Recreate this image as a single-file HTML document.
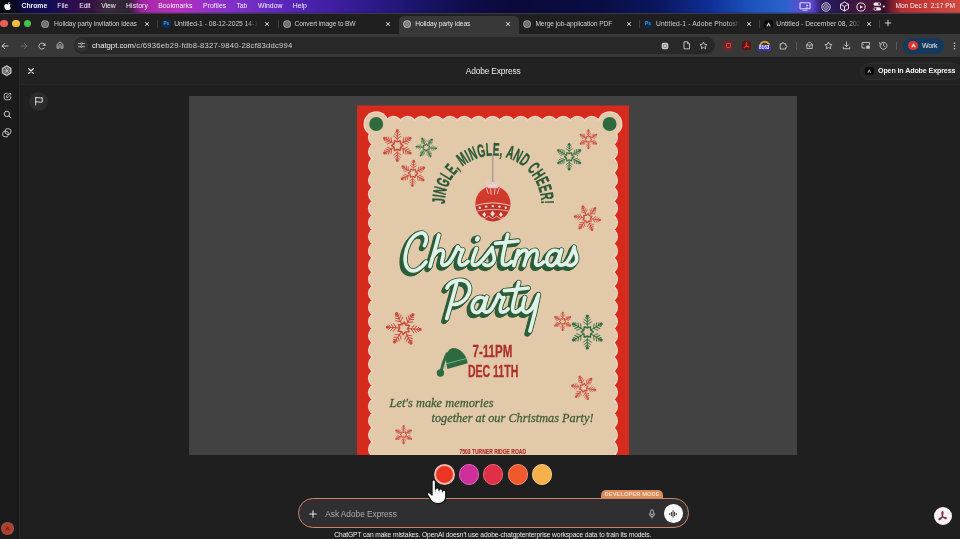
<!DOCTYPE html>
<html><head><meta charset="utf-8"><title>Holiday party ideas</title>
<style>
*{margin:0;padding:0;box-sizing:border-box}
html,body{width:960px;height:539px;overflow:hidden;background:#1e1e1e}
body{font-family:"Liberation Sans",sans-serif;position:relative;color:#ddd}
.t{position:absolute;white-space:pre;display:block}
.a{position:absolute}
svg{position:absolute;overflow:visible}
</style></head><body><div id="root" style="position:absolute;left:0;top:0;width:960px;height:539px;will-change:transform">
<div class="a" id="menubar" style="left:0;top:0;width:960px;height:13px;background:linear-gradient(90deg,
#07070f 0px,#090a1c 14px,#0d0c4a 24px,#120b56 48px,#2c0c52 70px,#34123f 92px,#3b2a3e 106px,#2e2432 128px,#55195a 133px,#9a229a 141px,#ad2aae 152px,#b52fba 178px,#9a30c8 205px,#7a2ec8 240px,#5e28bc 280px,#4520a8 320px,#2e1a8c 370px,#191468 420px,#0f0c48 470px,#0b0a3a 520px,#0a0d44 600px,#0b1660 660px,#0f2f98 710px,#1c52bb 750px,#2a62cc 785px,#5a4fd0 800px,#5a46c8 812px,#2c1c62 822px,#2a1850 840px,#431640 856px,#4a1638 872px,#34102a 884px,#7a1f2c 892px,#b62e32 902px,#c63c38 930px,#cf4a40 960px)"></div>
<div class="a" style="left:0;top:11.5px;width:960px;height:2px;background:linear-gradient(180deg,rgba(0,0,0,0),rgba(0,0,0,.55))"></div>
<svg style="left:3px;top:1px" width="8" height="10" viewBox="0 0 170 200"><path fill="#fff" d="M150 155c-6 14-9 20-17 32-11 17-27 38-46 38-17 0-22-11-45-11-23 0-28 11-45 11 0 0 0 0 0 0-19 0-34-19-45-36C-79 142-82 86-63 56c14-21 35-33 55-33 21 0 34 11 51 11 17 0 27-11 51-11 18 0 37 10 51 27-45 24-37 88 5 105zM92-4c8-11 15-26 12-42-14 1-30 10-39 21-8 10-16 26-13 41 15 0 31-9 40-20z" transform="translate(75 45) scale(.62)"/></svg>
<span class="t" id="t0" style="left:21.5px;top:2.67px;font-size:6.85px;line-height:6.85px;color:#f4f0fa;font-weight:700;letter-spacing:-0.027px;">Chrome</span>
<span class="t" id="t1" style="left:57.3px;top:2.67px;font-size:6.85px;line-height:6.85px;color:#f4f0fa;font-weight:400;letter-spacing:-0.008px;">File</span>
<span class="t" id="t2" style="left:79.3px;top:2.67px;font-size:6.85px;line-height:6.85px;color:#f4f0fa;font-weight:400;letter-spacing:-0.199px;">Edit</span>
<span class="t" id="t3" style="left:101.3px;top:2.67px;font-size:6.85px;line-height:6.85px;color:#f4f0fa;font-weight:400;letter-spacing:-0.130px;">View</span>
<span class="t" id="t4" style="left:126px;top:2.67px;font-size:6.85px;line-height:6.85px;color:#f4f0fa;font-weight:400;letter-spacing:0.100px;">History</span>
<span class="t" id="t5" style="left:158.3px;top:2.67px;font-size:6.85px;line-height:6.85px;color:#f4f0fa;font-weight:400;letter-spacing:-0.026px;">Bookmarks</span>
<span class="t" id="t6" style="left:203px;top:2.67px;font-size:6.85px;line-height:6.85px;color:#f4f0fa;font-weight:400;letter-spacing:0.059px;">Profiles</span>
<span class="t" id="t7" style="left:236.5px;top:2.67px;font-size:6.85px;line-height:6.85px;color:#f4f0fa;font-weight:400;letter-spacing:-0.082px;">Tab</span>
<span class="t" id="t8" style="left:258px;top:2.67px;font-size:6.85px;line-height:6.85px;color:#f4f0fa;font-weight:400;letter-spacing:0.026px;">Window</span>
<span class="t" id="t9" style="left:292.7px;top:2.67px;font-size:6.85px;line-height:6.85px;color:#f4f0fa;font-weight:400;letter-spacing:0.055px;">Help</span>
<span class="t" id="t10" style="left:895.5px;top:2.80px;font-size:6.6px;line-height:6.6px;color:#fdf0f0;font-weight:400;letter-spacing:-0.034px;">Mon Dec 8  2:17 PM</span>
<svg style="left:799px;top:2px" width="12" height="9" viewBox="0 0 24 18"><rect x="2" y="1.5" width="20" height="12" rx="1.5" fill="none" stroke="#d9d6ff" stroke-width="2.4"/><rect x="7" y="15.5" width="10" height="1.8" fill="#d9d6ff"/><circle cx="16" cy="7" r="2" fill="#d9d6ff"/><path d="M12 13c0-3 8-3 8 0z" fill="#d9d6ff"/></svg>
<svg style="left:821px;top:1.5px" width="10" height="10" viewBox="0 0 20 20"><circle cx="10" cy="10" r="8.4" fill="none" stroke="#e8e2f0" stroke-width="1.8"/><circle cx="10" cy="10" r="4.6" fill="none" stroke="#e8e2f0" stroke-width="1.6"/><circle cx="10" cy="10" r="1.6" fill="#e8e2f0"/></svg>
<svg style="left:839px;top:1px" width="11" height="11" viewBox="0 0 22 22"><path d="M11 2l8 4.5v9L11 20l-8-4.500v-9z M3 6.500l8 4.500 8-4.500 M11 11v9" fill="none" stroke="#f0e4ee" stroke-width="1.9" stroke-linejoin="round"/></svg>
<svg style="left:856px;top:1.5px" width="10" height="10" viewBox="0 0 20 20"><circle cx="10" cy="10" r="8.200" fill="none" stroke="#f0e4ea" stroke-width="1.9"/><path d="M8 6.300l6 3.700-6 3.700z" fill="#f0e4ea"/></svg>
<svg style="left:873px;top:2px" width="13" height="9" viewBox="0 0 26 18"><rect x="1" y="1" width="15" height="6.500" rx="3.200" fill="#f4e8ec"/><rect x="1" y="10.500" width="15" height="6.500" rx="3.200" fill="#f4e8ec"/><circle cx="12.500" cy="4.200" r="2.100" fill="#4a1638"/><circle cx="4.600" cy="13.700" r="2.100" fill="#4a1638"/><circle cx="21.500" cy="9" r="2.200" fill="#f4e8ec"/></svg>
<div class="a" id="tabstrip" style="left:0;top:13px;width:960px;height:21px;background:#1f1f20;border-top:1px solid #3c3c4c"></div>
<div class="a" style="left:398.5px;top:15.5px;width:120.5px;height:18.5px;background:#383838;border-radius:5px 5px 0 0"></div>
<div class="a" id="toolbar" style="left:0;top:33.700px;width:960px;height:23.300px;background:#383838"></div>

<div class="a" style="left:0.19999999999999973px;top:19.600px;width:7.800px;height:7.800px;border-radius:50%;background:#ec5f57"></div>
<div class="a" style="left:11.9px;top:19.600px;width:7.800px;height:7.800px;border-radius:50%;background:#f4bd3a"></div>
<div class="a" style="left:23.6px;top:19.600px;width:7.800px;height:7.800px;border-radius:50%;background:#46c34b"></div>
<svg style="left:41.199999999999996px;top:19.799999999999997px" width="8.2" height="8.2" viewBox="0 0 20 20"><circle cx="10" cy="10" r="9.600" fill="#9c9c9c"/><path d="M10 3.500l5.600 3.250v6.500L10 16.500l-5.600-3.250v-6.500z M10 7l2.600 1.500v3L10 13l-2.600-1.500v-3z" fill="none" stroke="#2a2a2a" stroke-width="1.300"/></svg>
<span class="t" id="t11" style="left:54px;top:20.55px;font-size:6.7px;line-height:6.7px;color:#cfcfcf;font-weight:400;letter-spacing:-0.078px;">Holiday party invitation ideas</span>
<svg style="left:143.2px;top:19.9px" width="8" height="8" viewBox="-4 -4 8 8"><path d="M-1.75 -1.75L1.75 1.75M1.75 -1.75L-1.75 1.75" stroke="#d2d2d2" stroke-width="1.0" stroke-linecap="round"/></svg>
<div class="a" style="left:162.3px;top:19.9px;width:8.400px;height:8.400px;border-radius:3.200px;background:#0e2c52"></div><span class="t" style="left:163.4px;top:21.4px;font-size:4.600px;line-height:5px;color:#4f97e0;font-weight:700">Ps</span>
<span class="t" id="t12" style="left:174.3px;top:20.55px;font-size:6.7px;line-height:6.7px;color:#cfcfcf;font-weight:400;letter-spacing:-0.011px;-webkit-mask-image:linear-gradient(90deg,#000 86%,transparent 100%);mask-image:linear-gradient(90deg,#000 86%,transparent 100%);">Untitled-1 - 08-12-2025 14-1</span>
<svg style="left:263.2px;top:19.9px" width="8" height="8" viewBox="-4 -4 8 8"><path d="M-1.75 -1.75L1.75 1.75M1.75 -1.75L-1.75 1.75" stroke="#d2d2d2" stroke-width="1.0" stroke-linecap="round"/></svg>
<svg style="left:282.7px;top:19.799999999999997px" width="8.2" height="8.2" viewBox="0 0 20 20"><circle cx="10" cy="10" r="9.600" fill="#9c9c9c"/><path d="M10 3.500l5.600 3.250v6.500L10 16.500l-5.600-3.250v-6.500z M10 7l2.600 1.500v3L10 13l-2.600-1.500v-3z" fill="none" stroke="#2a2a2a" stroke-width="1.300"/></svg>
<span class="t" id="t13" style="left:294.5px;top:20.55px;font-size:6.7px;line-height:6.7px;color:#cfcfcf;font-weight:400;letter-spacing:-0.135px;">Convert image to BW</span>
<svg style="left:383.6px;top:19.9px" width="8" height="8" viewBox="-4 -4 8 8"><path d="M-1.75 -1.75L1.75 1.75M1.75 -1.75L-1.75 1.75" stroke="#d2d2d2" stroke-width="1.0" stroke-linecap="round"/></svg>
<svg style="left:403.2px;top:19.799999999999997px" width="8.2" height="8.2" viewBox="0 0 20 20"><circle cx="10" cy="10" r="9.600" fill="#b4b4b4"/><path d="M10 3.500l5.600 3.250v6.500L10 16.500l-5.600-3.250v-6.500z M10 7l2.600 1.500v3L10 13l-2.600-1.500v-3z" fill="none" stroke="#2a2a2a" stroke-width="1.300"/></svg>
<span class="t" id="t14" style="left:415.3px;top:20.55px;font-size:6.7px;line-height:6.7px;color:#e6e6e6;font-weight:400;letter-spacing:-0.099px;">Holiday party ideas</span>
<svg style="left:504.2px;top:19.9px" width="8" height="8" viewBox="-4 -4 8 8"><path d="M-1.75 -1.75L1.75 1.75M1.75 -1.75L-1.75 1.75" stroke="#d2d2d2" stroke-width="1.0" stroke-linecap="round"/></svg>
<svg style="left:523.1999999999999px;top:19.799999999999997px" width="8.2" height="8.2" viewBox="0 0 20 20"><circle cx="10" cy="10" r="9.600" fill="#9c9c9c"/><path d="M10 3.500l5.600 3.250v6.500L10 16.500l-5.600-3.250v-6.500z M10 7l2.600 1.500v3L10 13l-2.600-1.500v-3z" fill="none" stroke="#2a2a2a" stroke-width="1.300"/></svg>
<span class="t" id="t15" style="left:535.4px;top:20.55px;font-size:6.7px;line-height:6.7px;color:#cfcfcf;font-weight:400;letter-spacing:-0.092px;">Merge job-application PDF</span>
<svg style="left:624.5px;top:19.9px" width="8" height="8" viewBox="-4 -4 8 8"><path d="M-1.75 -1.75L1.75 1.75M1.75 -1.75L-1.75 1.75" stroke="#d2d2d2" stroke-width="1.0" stroke-linecap="round"/></svg>
<div class="a" style="left:644px;top:19.9px;width:8.400px;height:8.400px;border-radius:3.200px;background:#0e2c52"></div><span class="t" style="left:645.1px;top:21.4px;font-size:4.600px;line-height:5px;color:#4f97e0;font-weight:700">Ps</span>
<span class="t" id="t16" style="left:656px;top:20.55px;font-size:6.7px;line-height:6.7px;color:#cfcfcf;font-weight:400;letter-spacing:0.156px;-webkit-mask-image:linear-gradient(90deg,#000 86%,transparent 100%);mask-image:linear-gradient(90deg,#000 86%,transparent 100%);">Untitled-1 - Adobe Photosh</span>
<svg style="left:745.3px;top:19.9px" width="8" height="8" viewBox="-4 -4 8 8"><path d="M-1.75 -1.75L1.75 1.75M1.75 -1.75L-1.75 1.75" stroke="#d2d2d2" stroke-width="1.0" stroke-linecap="round"/></svg>
<div class="a" style="left:764.3px;top:19.9px;width:8.400px;height:8.400px;border-radius:3px;background:#0a0a0a"></div><svg style="left:765.6999999999999px;top:21.5px" width="5.200" height="4.800" viewBox="0 0 10 9"><path d="M5 0.500L9.500 8.500H6.800L5 5.300 3.200 8.500H0.500z" fill="#cfcfcf"/></svg>
<span class="t" id="t17" style="left:776.3px;top:20.55px;font-size:6.7px;line-height:6.7px;color:#cfcfcf;font-weight:400;letter-spacing:0.021px;-webkit-mask-image:linear-gradient(90deg,#000 86%,transparent 100%);mask-image:linear-gradient(90deg,#000 86%,transparent 100%);">Untitled - December 08, 202</span>
<svg style="left:865.4px;top:19.9px" width="8" height="8" viewBox="-4 -4 8 8"><path d="M-1.75 -1.75L1.75 1.75M1.75 -1.75L-1.75 1.75" stroke="#d2d2d2" stroke-width="1.0" stroke-linecap="round"/></svg>
<div class="a" style="left:157.3px;top:19.500px;width:1px;height:8px;background:#3e3e3e"></div>
<div class="a" style="left:277.5px;top:19.500px;width:1px;height:8px;background:#3e3e3e"></div>
<div class="a" style="left:638.7px;top:19.500px;width:1px;height:8px;background:#3e3e3e"></div>
<div class="a" style="left:759.4px;top:19.500px;width:1px;height:8px;background:#3e3e3e"></div>
<div class="a" style="left:879px;top:19.500px;width:1px;height:8px;background:#3e3e3e"></div>
<svg style="left:884px;top:19.400px" width="8" height="8" viewBox="-4 -4 8 8"><path d="M-2.800 0H2.800M0 -2.800V2.800" stroke="#d6d6d6" stroke-width="0.950" stroke-linecap="round"/></svg>
<svg style="left:1px;top:41.6px" width="8" height="8" viewBox="-4 -4 8 8"><path d="M3 0H-2.800M-0.300 -2.700L-3 0l2.700 2.700" fill="none" stroke="#c8c8c8" stroke-width="0.950" stroke-linecap="round" stroke-linejoin="round"/></svg>
<svg style="left:19.500px;top:41.6px" width="8" height="8" viewBox="-4 -4 8 8"><path d="M-3 0H2.800M0.300 -2.700L3 0l-2.700 2.700" fill="none" stroke="#6e6e6e" stroke-width="0.950" stroke-linecap="round" stroke-linejoin="round"/></svg>
<svg style="left:37.700px;top:41.6px" width="8" height="8" viewBox="-4 -4 8 8"><path d="M2.900 -0.600A3 3 0 1 0 2.200 2.100" fill="none" stroke="#c8c8c8" stroke-width="0.950" stroke-linecap="round"/><path d="M3.400 -3.200v2.900H0.500z" fill="#c8c8c8"/></svg>
<svg style="left:55.800px;top:41.4px" width="8" height="8" viewBox="-4 -4 8 8"><path d="M-2.900 3.200V-0.600L0 -3.100 2.900 -0.600V3.200H1V0.600A1 1 0 0 0 -1 0.600V3.200z" fill="none" stroke="#c8c8c8" stroke-width="0.900" stroke-linejoin="round"/></svg>
<div class="a" style="left:74px;top:36.800px;width:640.500px;height:16.800px;border-radius:8.400px;background:#282828"></div>
<div class="a" style="left:75.300px;top:38.900px;width:13.200px;height:13.200px;border-radius:50%;background:#323232"></div>
<svg style="left:77.800px;top:42.1px" width="7" height="6.200" viewBox="0 0 16 14"><path d="M1 3.500h5M10.500 3.500H15M1 10.500h4.500M10 10.500h5" stroke="#d8d8d8" stroke-width="1.700" stroke-linecap="round"/><circle cx="8.300" cy="3.500" r="2" fill="none" stroke="#d8d8d8" stroke-width="1.500"/><circle cx="7.700" cy="10.500" r="2" fill="none" stroke="#d8d8d8" stroke-width="1.500"/></svg>
<span class="t" id="t18" style="left:92px;top:42.05px;font-size:7.7px;line-height:7.7px;color:#f2f2f2;font-weight:400;letter-spacing:0.010px;">chatgpt.com</span>
<span class="t" id="t19" style="left:134px;top:42.05px;font-size:7.7px;line-height:7.7px;color:#cfcfcf;font-weight:400;letter-spacing:0.217px;">/c/6936eb29-fdb8-8327-9840-28cf83ddc994</span>
<svg style="left:661px;top:41.6px" width="8" height="8" viewBox="0 0 16 16"><rect x="1.500" y="1.500" width="13" height="13" rx="3.500" fill="#cfcfcf"/><circle cx="8" cy="8" r="3.600" fill="none" stroke="#555" stroke-width="1.300"/></svg>
<svg style="left:682.500px;top:41.300000000000004px" width="7.500" height="8.600" viewBox="0 0 15 17"><path d="M2 1.500h7l4 4V15.500H2z" fill="none" stroke="#d4d4d4" stroke-width="1.700" stroke-linejoin="round"/><path d="M9 1.500v4h4" fill="none" stroke="#d4d4d4" stroke-width="1.400"/></svg>
<svg style="left:698.800px;top:41.1px" width="9" height="9" viewBox="0 0 18 18"><path d="M9 2l2.100 4.600 5 .6-3.700 3.400 1 4.900L9 13l-4.400 2.500 1-4.900L1.900 7.200l5-.6z" fill="none" stroke="#d4d4d4" stroke-width="1.600" stroke-linejoin="round"/></svg>
<div class="a" style="left:723.200px;top:40.800000000000004px;width:10px;height:9.600px;border-radius:2.200px;background:#6e2324"></div>
<div class="a" style="left:725.600px;top:43.1px;width:5.200px;height:5px;border-radius:1.200px;border:1px solid #d6514c"></div>
<svg style="left:741.500px;top:41.1px" width="9" height="9" viewBox="0 0 18 18"><rect x="0" y="0" width="18" height="18" rx="3" fill="#5a1512"/><path d="M9 3c1.300 0 1 3-0.300 6.200C7.500 12 5 14.500 4 13.600c-1-1 2-2.600 5.600-3 3-0.400 5.200 0.500 4.500 1.500-0.800 1-3.600-0.800-5.200-3.200C7.600 6.800 7.800 3 9 3z" fill="none" stroke="#ff4a3a" stroke-width="1.500"/></svg>
<svg style="left:758.500px;top:40.6px" width="11" height="5" viewBox="0 0 22 10"><path d="M2 8C5 1 14 -1 20 6" fill="none" stroke="#e8a63a" stroke-width="3.200" stroke-linecap="round"/></svg>
<div class="a" style="left:757.600px;top:45.300000000000004px;width:13.200px;height:6.200px;border-radius:2px;background:#3a33b0"></div>
<span class="t" id="t20" style="left:759px;top:46.20px;font-size:4.6px;line-height:4.6px;color:#fff;font-weight:700;letter-spacing:0.041px;">8163</span>
<svg style="left:778.500px;top:41.1px" width="9" height="9" viewBox="0 0 18 18"><path d="M2.500 5.500H6.200C5.200 2.300 10.800 2.300 9.800 5.500H13.500V9.200C16.700 8.200 16.700 13.800 13.500 12.800V16H2.500z" fill="none" stroke="#d0d0d0" stroke-width="1.700" stroke-linejoin="round"/></svg>
<div class="a" style="left:796.200px;top:41.6px;width:1px;height:8px;background:#5a5a5a"></div>
<svg style="left:804.500px;top:41.1px" width="9" height="9" viewBox="0 0 18 18"><path d="M2 8h14M4 8c0-7 10-7 10 0M3.500 8v7h11V8" fill="none" stroke="#cfcfcf" stroke-width="1.600" stroke-linejoin="round"/><circle cx="9" cy="11.500" r="1.600" fill="#cfcfcf"/></svg>
<svg style="left:823.500px;top:41.1px" width="9" height="9" viewBox="0 0 18 18"><path d="M9 2l2.100 4.600 5 .6-3.700 3.400 1 4.900L9 13l-4.400 2.500 1-4.900L1.900 7.200l5-.6z" fill="none" stroke="#cfcfcf" stroke-width="1.700" stroke-linejoin="round"/></svg>
<svg style="left:842.300px;top:41.1px" width="9" height="9" viewBox="0 0 18 18"><path d="M9 2v9M5 7.500L9 11.500l4-4M2.500 12.500V15.500h13V12.500" fill="none" stroke="#cfcfcf" stroke-width="1.800" stroke-linejoin="round" stroke-linecap="round"/></svg>
<svg style="left:860.500px;top:41.1px" width="9.500" height="9" viewBox="0 0 19 18"><path d="M17 8V3H2v11h7" fill="none" stroke="#cfcfcf" stroke-width="1.700" stroke-linejoin="round"/><rect x="10.500" y="9" width="7" height="6.500" rx="1" fill="#cfcfcf"/><path d="M4 6.500h2" stroke="#cfcfcf" stroke-width="1.500"/></svg>
<svg style="left:878.500px;top:41.1px" width="9" height="9" viewBox="0 0 18 18"><path d="M3.200 5.500A7 7 0 1 1 2 9" fill="none" stroke="#cfcfcf" stroke-width="1.700" stroke-linecap="round"/><path d="M1 2.500l.8 4.300 4.200-.9" fill="none" stroke="#cfcfcf" stroke-width="1.600" stroke-linejoin="round"/><path d="M9 5.500V9.300l2.500 1.700" fill="none" stroke="#cfcfcf" stroke-width="1.600" stroke-linecap="round"/></svg>
<div class="a" style="left:895.600px;top:41.6px;width:1px;height:8px;background:#5a5a5a"></div>
<div class="a" style="left:902.500px;top:37.600px;width:41px;height:16px;border-radius:8px;background:#15395c"></div>
<div class="a" style="left:908.200px;top:40.800000000000004px;width:9.600px;height:9.600px;border-radius:50%;background:#e0352a"></div>
<svg style="left:910.500px;top:43.1px" width="5" height="4.600" viewBox="0 0 10 9"><path d="M5 0.500L9.500 8.500H6.800L5 5.300 3.200 8.500H0.500z" fill="#fff"/></svg>
<span class="t" id="t21" style="left:922px;top:42.20px;font-size:7px;line-height:7px;color:#e9eef6;font-weight:400;letter-spacing:-0.205px;">Work</span>
<svg style="left:953px;top:41.6px" width="3" height="8" viewBox="0 0 3 8"><circle cx="1.500" cy="1.200" r="0.800" fill="#cfcfcf"/><circle cx="1.500" cy="4" r="0.800" fill="#cfcfcf"/><circle cx="1.500" cy="6.800" r="0.800" fill="#cfcfcf"/></svg>
<div class="a" style="left:0;top:57.500px;width:960px;height:481.500px;background:#1f1f1f"></div>
<div class="a" style="left:0;top:57.500px;width:20px;height:481.500px;background:#1b1b1b;border-right:1px solid #262626"></div>
<div class="a" style="left:21px;top:57.500px;width:939px;height:26px;background:#222222"></div>
<div class="a" style="left:20px;top:83.500px;width:940px;height:1px;background:#272727"></div>
<svg style="left:1.200px;top:64.900px" width="11.400" height="11.400" viewBox="0 0 22 22"><path d="M11 1.200l8.500 4.900v9.800L11 20.800l-8.500-4.900V6.100z" fill="#c4c4c4" stroke="#c4c4c4" stroke-width="1.600" stroke-linejoin="round"/><path d="M11 4.200l5.900 3.400v6.800L11 17.800l-5.900-3.400V7.600z M11 7.400l3.100 1.800v3.600L11 14.600l-3.100-1.800V9.200z M11 4.200v3.200 M16.900 7.600l-2.800 1.600 M16.900 14.400l-2.800-1.600 M11 17.800v-3.200 M5.100 14.400l2.800-1.600 M5.100 7.600l2.800 1.600" fill="none" stroke="#1b1b1b" stroke-width="1.100"/></svg>
<svg style="left:2.800px;top:92px" width="9" height="9" viewBox="0 0 18 18"><path d="M8.500 2.600H6A3.600 3.600 0 0 0 2.400 6.200V12A3.600 3.600 0 0 0 6 15.600H11.800A3.600 3.600 0 0 0 15.400 12V9.500" fill="none" stroke="#cfcfcf" stroke-width="1.700" stroke-linecap="round"/><path d="M13.600 1.800l2.600 2.600-6.300 6.300-3.100.5.500-3.100z" fill="none" stroke="#cfcfcf" stroke-width="1.600" stroke-linejoin="round"/></svg>
<svg style="left:2.600px;top:110.200px" width="9" height="9" viewBox="0 0 18 18"><circle cx="7.800" cy="7.800" r="5.400" fill="none" stroke="#cfcfcf" stroke-width="1.900"/><path d="M11.800 11.800L16 16" stroke="#cfcfcf" stroke-width="2" stroke-linecap="round"/></svg>
<svg style="left:2.300px;top:128.300px" width="9.500" height="9.500" viewBox="0 0 19 19"><rect x="6.500" y="1.500" width="11" height="11" rx="3.500" fill="none" stroke="#cfcfcf" stroke-width="1.700" transform="rotate(12 12 7)"/><rect x="1.500" y="6.500" width="11" height="11" rx="3.500" fill="none" stroke="#cfcfcf" stroke-width="1.700" transform="rotate(12 7 12)"/></svg>
<div class="a" style="left:1px;top:522px;width:12.500px;height:12.500px;border-radius:50%;background:radial-gradient(circle at 50% 52%,#b63c1c 0,#ad3f2a 40%,#9a5048 70%,#6a4446 90%,#3a2c2e 100%)"></div>
<svg style="left:4.800px;top:525.800px" width="5" height="4.600" viewBox="0 0 10 9"><path d="M5 0.500L9.500 8.500H6.800L5 5.300 3.200 8.500H0.500z" fill="#7c2012"/></svg>
<svg style="left:27.3px;top:66.6px" width="8" height="8" viewBox="-4 -4 8 8"><path d="M-2.5 -2.5L2.5 2.5M2.5 -2.5L-2.5 2.5" stroke="#e6e6e6" stroke-width="1.15" stroke-linecap="round"/></svg>
<span class="t" id="t22" style="left:465.8px;top:66.70px;font-size:8.4px;line-height:8.4px;color:#ececec;font-weight:400;letter-spacing:-0.162px;">Adobe Express</span>
<div class="a" style="left:860px;top:62.500px;width:102px;height:17px;border-radius:8.500px;border:1px solid #2e2e2e;background:#262626"></div>
<div class="a" style="left:865.200px;top:66.600px;width:8.600px;height:8.600px;border-radius:2.200px;background:#0a0a0a"></div>
<svg style="left:867.300px;top:68.800px" width="4.400" height="4" viewBox="0 0 10 9"><path d="M5 0.500L9.500 8.500H6.800L5 5.300 3.200 8.500H0.500z" fill="#b9b9b9"/></svg>
<span class="t" id="t23" style="left:878px;top:67.65px;font-size:7.1px;line-height:7.1px;color:#f6f6f6;font-weight:700;letter-spacing:-0.117px;">Open in Adobe Express</span>
<div class="a" style="left:29.400px;top:92px;width:18.800px;height:18.800px;border-radius:50%;background:#2b2b2b"></div>
<svg style="left:33.600px;top:96.400px" width="10" height="10" viewBox="0 0 20 20"><path d="M3.500 2.500V18 M3.500 3.500C8 2 12 5 16.500 3.500V12C12 13.500 8 10.500 3.500 12" fill="none" stroke="#e8e8e8" stroke-width="1.900" stroke-linejoin="round" stroke-linecap="round"/></svg>
<div class="a" style="left:189px;top:96px;width:608px;height:359px;background:#424242;overflow:hidden">
<svg style="left:0;top:0" width="608" height="359" viewBox="189 96 608 359"><rect x="357" y="105.500" width="272" height="360" fill="#d62a1c"/><rect x="372.66" y="120.56" width="240.68" height="350" fill="#fbd6c8"/><circle cx="393.40" cy="125.0" r="9.15" fill="#fbd6c8"/><circle cx="407.56" cy="125.0" r="9.15" fill="#fbd6c8"/><circle cx="421.72" cy="125.0" r="9.15" fill="#fbd6c8"/><circle cx="435.88" cy="125.0" r="9.15" fill="#fbd6c8"/><circle cx="450.04" cy="125.0" r="9.15" fill="#fbd6c8"/><circle cx="464.20" cy="125.0" r="9.15" fill="#fbd6c8"/><circle cx="478.36" cy="125.0" r="9.15" fill="#fbd6c8"/><circle cx="492.52" cy="125.0" r="9.15" fill="#fbd6c8"/><circle cx="506.69" cy="125.0" r="9.15" fill="#fbd6c8"/><circle cx="520.85" cy="125.0" r="9.15" fill="#fbd6c8"/><circle cx="535.01" cy="125.0" r="9.15" fill="#fbd6c8"/><circle cx="549.17" cy="125.0" r="9.15" fill="#fbd6c8"/><circle cx="563.33" cy="125.0" r="9.15" fill="#fbd6c8"/><circle cx="577.49" cy="125.0" r="9.15" fill="#fbd6c8"/><circle cx="591.65" cy="125.0" r="9.15" fill="#fbd6c8"/><circle cx="377.1" cy="137.50" r="9.15" fill="#fbd6c8"/><circle cx="608.9" cy="137.50" r="9.15" fill="#fbd6c8"/><circle cx="377.1" cy="151.66" r="9.15" fill="#fbd6c8"/><circle cx="608.9" cy="151.66" r="9.15" fill="#fbd6c8"/><circle cx="377.1" cy="165.82" r="9.15" fill="#fbd6c8"/><circle cx="608.9" cy="165.82" r="9.15" fill="#fbd6c8"/><circle cx="377.1" cy="179.98" r="9.15" fill="#fbd6c8"/><circle cx="608.9" cy="179.98" r="9.15" fill="#fbd6c8"/><circle cx="377.1" cy="194.14" r="9.15" fill="#fbd6c8"/><circle cx="608.9" cy="194.14" r="9.15" fill="#fbd6c8"/><circle cx="377.1" cy="208.30" r="9.15" fill="#fbd6c8"/><circle cx="608.9" cy="208.30" r="9.15" fill="#fbd6c8"/><circle cx="377.1" cy="222.46" r="9.15" fill="#fbd6c8"/><circle cx="608.9" cy="222.46" r="9.15" fill="#fbd6c8"/><circle cx="377.1" cy="236.62" r="9.15" fill="#fbd6c8"/><circle cx="608.9" cy="236.62" r="9.15" fill="#fbd6c8"/><circle cx="377.1" cy="250.78" r="9.15" fill="#fbd6c8"/><circle cx="608.9" cy="250.78" r="9.15" fill="#fbd6c8"/><circle cx="377.1" cy="264.94" r="9.15" fill="#fbd6c8"/><circle cx="608.9" cy="264.94" r="9.15" fill="#fbd6c8"/><circle cx="377.1" cy="279.10" r="9.15" fill="#fbd6c8"/><circle cx="608.9" cy="279.10" r="9.15" fill="#fbd6c8"/><circle cx="377.1" cy="293.26" r="9.15" fill="#fbd6c8"/><circle cx="608.9" cy="293.26" r="9.15" fill="#fbd6c8"/><circle cx="377.1" cy="307.42" r="9.15" fill="#fbd6c8"/><circle cx="608.9" cy="307.42" r="9.15" fill="#fbd6c8"/><circle cx="377.1" cy="321.58" r="9.15" fill="#fbd6c8"/><circle cx="608.9" cy="321.58" r="9.15" fill="#fbd6c8"/><circle cx="377.1" cy="335.74" r="9.15" fill="#fbd6c8"/><circle cx="608.9" cy="335.74" r="9.15" fill="#fbd6c8"/><circle cx="377.1" cy="349.90" r="9.15" fill="#fbd6c8"/><circle cx="608.9" cy="349.90" r="9.15" fill="#fbd6c8"/><circle cx="377.1" cy="364.06" r="9.15" fill="#fbd6c8"/><circle cx="608.9" cy="364.06" r="9.15" fill="#fbd6c8"/><circle cx="377.1" cy="378.22" r="9.15" fill="#fbd6c8"/><circle cx="608.9" cy="378.22" r="9.15" fill="#fbd6c8"/><circle cx="377.1" cy="392.38" r="9.15" fill="#fbd6c8"/><circle cx="608.9" cy="392.38" r="9.15" fill="#fbd6c8"/><circle cx="377.1" cy="406.54" r="9.15" fill="#fbd6c8"/><circle cx="608.9" cy="406.54" r="9.15" fill="#fbd6c8"/><circle cx="377.1" cy="420.70" r="9.15" fill="#fbd6c8"/><circle cx="608.9" cy="420.70" r="9.15" fill="#fbd6c8"/><circle cx="377.1" cy="434.86" r="9.15" fill="#fbd6c8"/><circle cx="608.9" cy="434.86" r="9.15" fill="#fbd6c8"/><circle cx="377.1" cy="449.02" r="9.15" fill="#fbd6c8"/><circle cx="608.9" cy="449.02" r="9.15" fill="#fbd6c8"/><circle cx="377.1" cy="463.18" r="9.15" fill="#fbd6c8"/><circle cx="608.9" cy="463.18" r="9.15" fill="#fbd6c8"/><circle cx="376.2" cy="123.900" r="12.65" fill="#fbd6c8"/><circle cx="609.8" cy="123.900" r="12.65" fill="#fbd6c8"/><rect x="373.35" y="121.25" width="239.30" height="350" fill="#e2c9a9"/><circle cx="393.40" cy="125.0" r="8.0" fill="#e2c9a9"/><circle cx="407.56" cy="125.0" r="8.0" fill="#e2c9a9"/><circle cx="421.72" cy="125.0" r="8.0" fill="#e2c9a9"/><circle cx="435.88" cy="125.0" r="8.0" fill="#e2c9a9"/><circle cx="450.04" cy="125.0" r="8.0" fill="#e2c9a9"/><circle cx="464.20" cy="125.0" r="8.0" fill="#e2c9a9"/><circle cx="478.36" cy="125.0" r="8.0" fill="#e2c9a9"/><circle cx="492.52" cy="125.0" r="8.0" fill="#e2c9a9"/><circle cx="506.69" cy="125.0" r="8.0" fill="#e2c9a9"/><circle cx="520.85" cy="125.0" r="8.0" fill="#e2c9a9"/><circle cx="535.01" cy="125.0" r="8.0" fill="#e2c9a9"/><circle cx="549.17" cy="125.0" r="8.0" fill="#e2c9a9"/><circle cx="563.33" cy="125.0" r="8.0" fill="#e2c9a9"/><circle cx="577.49" cy="125.0" r="8.0" fill="#e2c9a9"/><circle cx="591.65" cy="125.0" r="8.0" fill="#e2c9a9"/><circle cx="377.1" cy="137.50" r="8.0" fill="#e2c9a9"/><circle cx="608.9" cy="137.50" r="8.0" fill="#e2c9a9"/><circle cx="377.1" cy="151.66" r="8.0" fill="#e2c9a9"/><circle cx="608.9" cy="151.66" r="8.0" fill="#e2c9a9"/><circle cx="377.1" cy="165.82" r="8.0" fill="#e2c9a9"/><circle cx="608.9" cy="165.82" r="8.0" fill="#e2c9a9"/><circle cx="377.1" cy="179.98" r="8.0" fill="#e2c9a9"/><circle cx="608.9" cy="179.98" r="8.0" fill="#e2c9a9"/><circle cx="377.1" cy="194.14" r="8.0" fill="#e2c9a9"/><circle cx="608.9" cy="194.14" r="8.0" fill="#e2c9a9"/><circle cx="377.1" cy="208.30" r="8.0" fill="#e2c9a9"/><circle cx="608.9" cy="208.30" r="8.0" fill="#e2c9a9"/><circle cx="377.1" cy="222.46" r="8.0" fill="#e2c9a9"/><circle cx="608.9" cy="222.46" r="8.0" fill="#e2c9a9"/><circle cx="377.1" cy="236.62" r="8.0" fill="#e2c9a9"/><circle cx="608.9" cy="236.62" r="8.0" fill="#e2c9a9"/><circle cx="377.1" cy="250.78" r="8.0" fill="#e2c9a9"/><circle cx="608.9" cy="250.78" r="8.0" fill="#e2c9a9"/><circle cx="377.1" cy="264.94" r="8.0" fill="#e2c9a9"/><circle cx="608.9" cy="264.94" r="8.0" fill="#e2c9a9"/><circle cx="377.1" cy="279.10" r="8.0" fill="#e2c9a9"/><circle cx="608.9" cy="279.10" r="8.0" fill="#e2c9a9"/><circle cx="377.1" cy="293.26" r="8.0" fill="#e2c9a9"/><circle cx="608.9" cy="293.26" r="8.0" fill="#e2c9a9"/><circle cx="377.1" cy="307.42" r="8.0" fill="#e2c9a9"/><circle cx="608.9" cy="307.42" r="8.0" fill="#e2c9a9"/><circle cx="377.1" cy="321.58" r="8.0" fill="#e2c9a9"/><circle cx="608.9" cy="321.58" r="8.0" fill="#e2c9a9"/><circle cx="377.1" cy="335.74" r="8.0" fill="#e2c9a9"/><circle cx="608.9" cy="335.74" r="8.0" fill="#e2c9a9"/><circle cx="377.1" cy="349.90" r="8.0" fill="#e2c9a9"/><circle cx="608.9" cy="349.90" r="8.0" fill="#e2c9a9"/><circle cx="377.1" cy="364.06" r="8.0" fill="#e2c9a9"/><circle cx="608.9" cy="364.06" r="8.0" fill="#e2c9a9"/><circle cx="377.1" cy="378.22" r="8.0" fill="#e2c9a9"/><circle cx="608.9" cy="378.22" r="8.0" fill="#e2c9a9"/><circle cx="377.1" cy="392.38" r="8.0" fill="#e2c9a9"/><circle cx="608.9" cy="392.38" r="8.0" fill="#e2c9a9"/><circle cx="377.1" cy="406.54" r="8.0" fill="#e2c9a9"/><circle cx="608.9" cy="406.54" r="8.0" fill="#e2c9a9"/><circle cx="377.1" cy="420.70" r="8.0" fill="#e2c9a9"/><circle cx="608.9" cy="420.70" r="8.0" fill="#e2c9a9"/><circle cx="377.1" cy="434.86" r="8.0" fill="#e2c9a9"/><circle cx="608.9" cy="434.86" r="8.0" fill="#e2c9a9"/><circle cx="377.1" cy="449.02" r="8.0" fill="#e2c9a9"/><circle cx="608.9" cy="449.02" r="8.0" fill="#e2c9a9"/><circle cx="377.1" cy="463.18" r="8.0" fill="#e2c9a9"/><circle cx="608.9" cy="463.18" r="8.0" fill="#e2c9a9"/><circle cx="376.2" cy="123.900" r="11.5" fill="#e2c9a9"/><circle cx="609.8" cy="123.900" r="11.5" fill="#e2c9a9"/><circle cx="376.2" cy="124" r="7" fill="#2d6a40"/><circle cx="609.6" cy="124" r="7" fill="#2d6a40"/><g transform="translate(397.3 145.6) rotate(0) scale(1.56)" stroke="#c9463b" stroke-width="0.55" stroke-linecap="round" fill="none"><g transform="rotate(0)"><path d="M0 -2.600V-9.300 M0 -4.300l-2.300 -1.700 M0 -4.300l2.300 -1.700 M0 -6l-1.900 -1.500 M0 -6l1.900 -1.500 M0 -7.600l-1.300 -1.100 M0 -7.600l1.300 -1.100"/><circle cx="0" cy="-9.500" r="0.950" fill="#c9463b" stroke="none"/></g><g transform="rotate(60)"><path d="M0 -2.600V-9.300 M0 -4.300l-2.300 -1.700 M0 -4.300l2.300 -1.700 M0 -6l-1.900 -1.500 M0 -6l1.900 -1.500 M0 -7.600l-1.300 -1.100 M0 -7.600l1.300 -1.100"/><circle cx="0" cy="-9.500" r="0.950" fill="#c9463b" stroke="none"/></g><g transform="rotate(120)"><path d="M0 -2.600V-9.300 M0 -4.300l-2.300 -1.700 M0 -4.300l2.300 -1.700 M0 -6l-1.900 -1.500 M0 -6l1.900 -1.500 M0 -7.600l-1.300 -1.100 M0 -7.600l1.300 -1.100"/><circle cx="0" cy="-9.500" r="0.950" fill="#c9463b" stroke="none"/></g><g transform="rotate(180)"><path d="M0 -2.600V-9.300 M0 -4.300l-2.300 -1.700 M0 -4.300l2.300 -1.700 M0 -6l-1.900 -1.500 M0 -6l1.900 -1.500 M0 -7.600l-1.300 -1.100 M0 -7.600l1.300 -1.100"/><circle cx="0" cy="-9.500" r="0.950" fill="#c9463b" stroke="none"/></g><g transform="rotate(240)"><path d="M0 -2.600V-9.300 M0 -4.300l-2.300 -1.700 M0 -4.300l2.300 -1.700 M0 -6l-1.900 -1.500 M0 -6l1.900 -1.500 M0 -7.600l-1.300 -1.100 M0 -7.600l1.300 -1.100"/><circle cx="0" cy="-9.500" r="0.950" fill="#c9463b" stroke="none"/></g><g transform="rotate(300)"><path d="M0 -2.600V-9.300 M0 -4.300l-2.300 -1.700 M0 -4.300l2.300 -1.700 M0 -6l-1.900 -1.500 M0 -6l1.900 -1.500 M0 -7.600l-1.300 -1.100 M0 -7.600l1.300 -1.100"/><circle cx="0" cy="-9.500" r="0.950" fill="#c9463b" stroke="none"/></g><path d="M1.85 -3.20L1.99 -1.15L3.70 -0.00L1.99 1.15L1.85 3.20L0.00 2.30L-1.85 3.20L-1.99 1.15L-3.70 0.00L-1.99 -1.15L-1.85 -3.20L-0.00 -2.30Z" stroke-width="0.83" stroke-linejoin="round"/></g><g transform="translate(426.3 147.5) rotate(-25) scale(1.03)" stroke="#2d6a40" stroke-width="0.58" stroke-linecap="round" fill="none"><g transform="rotate(0)"><path d="M0 -2.600V-9.300 M0 -4.300l-2.300 -1.700 M0 -4.300l2.300 -1.700 M0 -6l-1.900 -1.500 M0 -6l1.900 -1.500 M0 -7.600l-1.300 -1.100 M0 -7.600l1.300 -1.100"/><circle cx="0" cy="-9.500" r="0.950" fill="#2d6a40" stroke="none"/></g><g transform="rotate(60)"><path d="M0 -2.600V-9.300 M0 -4.300l-2.300 -1.700 M0 -4.300l2.300 -1.700 M0 -6l-1.900 -1.500 M0 -6l1.900 -1.500 M0 -7.600l-1.300 -1.100 M0 -7.600l1.300 -1.100"/><circle cx="0" cy="-9.500" r="0.950" fill="#2d6a40" stroke="none"/></g><g transform="rotate(120)"><path d="M0 -2.600V-9.300 M0 -4.300l-2.300 -1.700 M0 -4.300l2.300 -1.700 M0 -6l-1.900 -1.500 M0 -6l1.900 -1.500 M0 -7.600l-1.300 -1.100 M0 -7.600l1.300 -1.100"/><circle cx="0" cy="-9.500" r="0.950" fill="#2d6a40" stroke="none"/></g><g transform="rotate(180)"><path d="M0 -2.600V-9.300 M0 -4.300l-2.300 -1.700 M0 -4.300l2.300 -1.700 M0 -6l-1.900 -1.500 M0 -6l1.900 -1.500 M0 -7.600l-1.300 -1.100 M0 -7.600l1.300 -1.100"/><circle cx="0" cy="-9.500" r="0.950" fill="#2d6a40" stroke="none"/></g><g transform="rotate(240)"><path d="M0 -2.600V-9.300 M0 -4.300l-2.300 -1.700 M0 -4.300l2.300 -1.700 M0 -6l-1.900 -1.500 M0 -6l1.900 -1.500 M0 -7.600l-1.300 -1.100 M0 -7.600l1.300 -1.100"/><circle cx="0" cy="-9.500" r="0.950" fill="#2d6a40" stroke="none"/></g><g transform="rotate(300)"><path d="M0 -2.600V-9.300 M0 -4.300l-2.300 -1.700 M0 -4.300l2.300 -1.700 M0 -6l-1.900 -1.500 M0 -6l1.900 -1.500 M0 -7.600l-1.300 -1.100 M0 -7.600l1.300 -1.100"/><circle cx="0" cy="-9.500" r="0.950" fill="#2d6a40" stroke="none"/></g><path d="M1.85 -3.20L1.99 -1.15L3.70 -0.00L1.99 1.15L1.85 3.20L0.00 2.30L-1.85 3.20L-1.99 1.15L-3.70 0.00L-1.99 -1.15L-1.85 -3.20L-0.00 -2.30Z" stroke-width="0.87" stroke-linejoin="round"/></g><g transform="translate(413 173.3) rotate(3) scale(1.3)" stroke="#c9463b" stroke-width="0.55" stroke-linecap="round" fill="none"><g transform="rotate(0)"><path d="M0 -2.600V-9.300 M0 -4.300l-2.300 -1.700 M0 -4.300l2.300 -1.700 M0 -6l-1.900 -1.500 M0 -6l1.900 -1.500 M0 -7.600l-1.300 -1.100 M0 -7.600l1.300 -1.100"/><circle cx="0" cy="-9.500" r="0.950" fill="#c9463b" stroke="none"/></g><g transform="rotate(60)"><path d="M0 -2.600V-9.300 M0 -4.300l-2.300 -1.700 M0 -4.300l2.300 -1.700 M0 -6l-1.900 -1.500 M0 -6l1.900 -1.500 M0 -7.600l-1.300 -1.100 M0 -7.600l1.300 -1.100"/><circle cx="0" cy="-9.500" r="0.950" fill="#c9463b" stroke="none"/></g><g transform="rotate(120)"><path d="M0 -2.600V-9.300 M0 -4.300l-2.300 -1.700 M0 -4.300l2.300 -1.700 M0 -6l-1.900 -1.500 M0 -6l1.900 -1.500 M0 -7.600l-1.300 -1.100 M0 -7.600l1.300 -1.100"/><circle cx="0" cy="-9.500" r="0.950" fill="#c9463b" stroke="none"/></g><g transform="rotate(180)"><path d="M0 -2.600V-9.300 M0 -4.300l-2.300 -1.700 M0 -4.300l2.300 -1.700 M0 -6l-1.900 -1.500 M0 -6l1.900 -1.500 M0 -7.600l-1.300 -1.100 M0 -7.600l1.300 -1.100"/><circle cx="0" cy="-9.500" r="0.950" fill="#c9463b" stroke="none"/></g><g transform="rotate(240)"><path d="M0 -2.600V-9.300 M0 -4.300l-2.300 -1.700 M0 -4.300l2.300 -1.700 M0 -6l-1.900 -1.500 M0 -6l1.900 -1.500 M0 -7.600l-1.300 -1.100 M0 -7.600l1.300 -1.100"/><circle cx="0" cy="-9.500" r="0.950" fill="#c9463b" stroke="none"/></g><g transform="rotate(300)"><path d="M0 -2.600V-9.300 M0 -4.300l-2.300 -1.700 M0 -4.300l2.300 -1.700 M0 -6l-1.900 -1.500 M0 -6l1.900 -1.500 M0 -7.600l-1.300 -1.100 M0 -7.600l1.300 -1.100"/><circle cx="0" cy="-9.500" r="0.950" fill="#c9463b" stroke="none"/></g><path d="M1.85 -3.20L1.99 -1.15L3.70 -0.00L1.99 1.15L1.85 3.20L0.00 2.30L-1.85 3.20L-1.99 1.15L-3.70 0.00L-1.99 -1.15L-1.85 -3.20L-0.00 -2.30Z" stroke-width="0.83" stroke-linejoin="round"/></g><g transform="translate(569.2 156.7) rotate(0) scale(1.3199999999999998)" stroke="#2d6a40" stroke-width="0.55" stroke-linecap="round" fill="none"><g transform="rotate(0)"><path d="M0 -2.600V-9.300 M0 -4.300l-2.300 -1.700 M0 -4.300l2.300 -1.700 M0 -6l-1.900 -1.500 M0 -6l1.900 -1.500 M0 -7.600l-1.300 -1.100 M0 -7.600l1.300 -1.100"/><circle cx="0" cy="-9.500" r="0.950" fill="#2d6a40" stroke="none"/></g><g transform="rotate(60)"><path d="M0 -2.600V-9.300 M0 -4.300l-2.300 -1.700 M0 -4.300l2.300 -1.700 M0 -6l-1.900 -1.500 M0 -6l1.900 -1.500 M0 -7.600l-1.300 -1.100 M0 -7.600l1.300 -1.100"/><circle cx="0" cy="-9.500" r="0.950" fill="#2d6a40" stroke="none"/></g><g transform="rotate(120)"><path d="M0 -2.600V-9.300 M0 -4.300l-2.300 -1.700 M0 -4.300l2.300 -1.700 M0 -6l-1.900 -1.500 M0 -6l1.900 -1.500 M0 -7.600l-1.300 -1.100 M0 -7.600l1.300 -1.100"/><circle cx="0" cy="-9.500" r="0.950" fill="#2d6a40" stroke="none"/></g><g transform="rotate(180)"><path d="M0 -2.600V-9.300 M0 -4.300l-2.300 -1.700 M0 -4.300l2.300 -1.700 M0 -6l-1.900 -1.500 M0 -6l1.900 -1.500 M0 -7.600l-1.300 -1.100 M0 -7.600l1.300 -1.100"/><circle cx="0" cy="-9.500" r="0.950" fill="#2d6a40" stroke="none"/></g><g transform="rotate(240)"><path d="M0 -2.600V-9.300 M0 -4.300l-2.300 -1.700 M0 -4.300l2.300 -1.700 M0 -6l-1.900 -1.500 M0 -6l1.900 -1.500 M0 -7.600l-1.300 -1.100 M0 -7.600l1.300 -1.100"/><circle cx="0" cy="-9.500" r="0.950" fill="#2d6a40" stroke="none"/></g><g transform="rotate(300)"><path d="M0 -2.600V-9.300 M0 -4.300l-2.300 -1.700 M0 -4.300l2.300 -1.700 M0 -6l-1.900 -1.500 M0 -6l1.900 -1.500 M0 -7.600l-1.300 -1.100 M0 -7.600l1.300 -1.100"/><circle cx="0" cy="-9.500" r="0.950" fill="#2d6a40" stroke="none"/></g><path d="M1.85 -3.20L1.99 -1.15L3.70 -0.00L1.99 1.15L1.85 3.20L0.00 2.30L-1.85 3.20L-1.99 1.15L-3.70 0.00L-1.99 -1.15L-1.85 -3.20L-0.00 -2.30Z" stroke-width="0.82" stroke-linejoin="round"/></g><g transform="translate(588.4 139.3) rotate(0) scale(0.95)" stroke="#c9463b" stroke-width="0.63" stroke-linecap="round" fill="none"><g transform="rotate(0)"><path d="M0 -2.600V-9.300 M0 -4.300l-2.300 -1.700 M0 -4.300l2.300 -1.700 M0 -6l-1.900 -1.500 M0 -6l1.900 -1.500 M0 -7.600l-1.300 -1.100 M0 -7.600l1.300 -1.100"/><circle cx="0" cy="-9.500" r="0.950" fill="#c9463b" stroke="none"/></g><g transform="rotate(60)"><path d="M0 -2.600V-9.300 M0 -4.300l-2.300 -1.700 M0 -4.300l2.300 -1.700 M0 -6l-1.900 -1.500 M0 -6l1.900 -1.500 M0 -7.600l-1.300 -1.100 M0 -7.600l1.300 -1.100"/><circle cx="0" cy="-9.500" r="0.950" fill="#c9463b" stroke="none"/></g><g transform="rotate(120)"><path d="M0 -2.600V-9.300 M0 -4.300l-2.300 -1.700 M0 -4.300l2.300 -1.700 M0 -6l-1.900 -1.500 M0 -6l1.900 -1.500 M0 -7.600l-1.300 -1.100 M0 -7.600l1.300 -1.100"/><circle cx="0" cy="-9.500" r="0.950" fill="#c9463b" stroke="none"/></g><g transform="rotate(180)"><path d="M0 -2.600V-9.300 M0 -4.300l-2.300 -1.700 M0 -4.300l2.300 -1.700 M0 -6l-1.900 -1.500 M0 -6l1.900 -1.500 M0 -7.600l-1.300 -1.100 M0 -7.600l1.300 -1.100"/><circle cx="0" cy="-9.500" r="0.950" fill="#c9463b" stroke="none"/></g><g transform="rotate(240)"><path d="M0 -2.600V-9.300 M0 -4.300l-2.300 -1.700 M0 -4.300l2.300 -1.700 M0 -6l-1.900 -1.500 M0 -6l1.900 -1.500 M0 -7.600l-1.300 -1.100 M0 -7.600l1.300 -1.100"/><circle cx="0" cy="-9.500" r="0.950" fill="#c9463b" stroke="none"/></g><g transform="rotate(300)"><path d="M0 -2.600V-9.300 M0 -4.300l-2.300 -1.700 M0 -4.300l2.300 -1.700 M0 -6l-1.900 -1.500 M0 -6l1.900 -1.500 M0 -7.600l-1.300 -1.100 M0 -7.600l1.300 -1.100"/><circle cx="0" cy="-9.500" r="0.950" fill="#c9463b" stroke="none"/></g><path d="M1.85 -3.20L1.99 -1.15L3.70 -0.00L1.99 1.15L1.85 3.20L0.00 2.30L-1.85 3.20L-1.99 1.15L-3.70 0.00L-1.99 -1.15L-1.85 -3.20L-0.00 -2.30Z" stroke-width="0.95" stroke-linejoin="round"/></g><g transform="translate(587.4 218.2) rotate(-22) scale(1.3199999999999998)" stroke="#c9463b" stroke-width="0.55" stroke-linecap="round" fill="none"><g transform="rotate(0)"><path d="M0 -2.600V-9.300 M0 -4.300l-2.300 -1.700 M0 -4.300l2.300 -1.700 M0 -6l-1.900 -1.500 M0 -6l1.900 -1.500 M0 -7.600l-1.300 -1.100 M0 -7.600l1.300 -1.100"/><circle cx="0" cy="-9.500" r="0.950" fill="#c9463b" stroke="none"/></g><g transform="rotate(60)"><path d="M0 -2.600V-9.300 M0 -4.300l-2.300 -1.700 M0 -4.300l2.300 -1.700 M0 -6l-1.900 -1.500 M0 -6l1.900 -1.500 M0 -7.600l-1.300 -1.100 M0 -7.600l1.300 -1.100"/><circle cx="0" cy="-9.500" r="0.950" fill="#c9463b" stroke="none"/></g><g transform="rotate(120)"><path d="M0 -2.600V-9.300 M0 -4.300l-2.300 -1.700 M0 -4.300l2.300 -1.700 M0 -6l-1.900 -1.500 M0 -6l1.900 -1.500 M0 -7.600l-1.300 -1.100 M0 -7.600l1.300 -1.100"/><circle cx="0" cy="-9.500" r="0.950" fill="#c9463b" stroke="none"/></g><g transform="rotate(180)"><path d="M0 -2.600V-9.300 M0 -4.300l-2.300 -1.700 M0 -4.300l2.300 -1.700 M0 -6l-1.900 -1.500 M0 -6l1.900 -1.500 M0 -7.600l-1.300 -1.100 M0 -7.600l1.300 -1.100"/><circle cx="0" cy="-9.500" r="0.950" fill="#c9463b" stroke="none"/></g><g transform="rotate(240)"><path d="M0 -2.600V-9.300 M0 -4.300l-2.300 -1.700 M0 -4.300l2.300 -1.700 M0 -6l-1.900 -1.500 M0 -6l1.900 -1.500 M0 -7.600l-1.300 -1.100 M0 -7.600l1.300 -1.100"/><circle cx="0" cy="-9.500" r="0.950" fill="#c9463b" stroke="none"/></g><g transform="rotate(300)"><path d="M0 -2.600V-9.300 M0 -4.300l-2.300 -1.700 M0 -4.300l2.300 -1.700 M0 -6l-1.900 -1.500 M0 -6l1.900 -1.500 M0 -7.600l-1.300 -1.100 M0 -7.600l1.300 -1.100"/><circle cx="0" cy="-9.500" r="0.950" fill="#c9463b" stroke="none"/></g><path d="M1.85 -3.20L1.99 -1.15L3.70 -0.00L1.99 1.15L1.85 3.20L0.00 2.30L-1.85 3.20L-1.99 1.15L-3.70 0.00L-1.99 -1.15L-1.85 -3.20L-0.00 -2.30Z" stroke-width="0.82" stroke-linejoin="round"/></g><g transform="translate(403.7 328.3) rotate(-26) scale(1.72)" stroke="#c9463b" stroke-width="0.55" stroke-linecap="round" fill="none"><g transform="rotate(0)"><path d="M0 -2.600V-9.300 M0 -4.300l-2.300 -1.700 M0 -4.300l2.300 -1.700 M0 -6l-1.900 -1.500 M0 -6l1.900 -1.500 M0 -7.600l-1.300 -1.100 M0 -7.600l1.300 -1.100"/><circle cx="0" cy="-9.500" r="0.950" fill="#c9463b" stroke="none"/></g><g transform="rotate(60)"><path d="M0 -2.600V-9.300 M0 -4.300l-2.300 -1.700 M0 -4.300l2.300 -1.700 M0 -6l-1.900 -1.500 M0 -6l1.900 -1.500 M0 -7.600l-1.300 -1.100 M0 -7.600l1.300 -1.100"/><circle cx="0" cy="-9.500" r="0.950" fill="#c9463b" stroke="none"/></g><g transform="rotate(120)"><path d="M0 -2.600V-9.300 M0 -4.300l-2.300 -1.700 M0 -4.300l2.300 -1.700 M0 -6l-1.900 -1.500 M0 -6l1.900 -1.500 M0 -7.600l-1.300 -1.100 M0 -7.600l1.300 -1.100"/><circle cx="0" cy="-9.500" r="0.950" fill="#c9463b" stroke="none"/></g><g transform="rotate(180)"><path d="M0 -2.600V-9.300 M0 -4.300l-2.300 -1.700 M0 -4.300l2.300 -1.700 M0 -6l-1.900 -1.500 M0 -6l1.900 -1.500 M0 -7.600l-1.300 -1.100 M0 -7.600l1.300 -1.100"/><circle cx="0" cy="-9.500" r="0.950" fill="#c9463b" stroke="none"/></g><g transform="rotate(240)"><path d="M0 -2.600V-9.300 M0 -4.300l-2.300 -1.700 M0 -4.300l2.300 -1.700 M0 -6l-1.900 -1.500 M0 -6l1.900 -1.500 M0 -7.600l-1.300 -1.100 M0 -7.600l1.300 -1.100"/><circle cx="0" cy="-9.500" r="0.950" fill="#c9463b" stroke="none"/></g><g transform="rotate(300)"><path d="M0 -2.600V-9.300 M0 -4.300l-2.300 -1.700 M0 -4.300l2.300 -1.700 M0 -6l-1.900 -1.500 M0 -6l1.900 -1.500 M0 -7.600l-1.300 -1.100 M0 -7.600l1.300 -1.100"/><circle cx="0" cy="-9.500" r="0.950" fill="#c9463b" stroke="none"/></g><path d="M1.85 -3.20L1.99 -1.15L3.70 -0.00L1.99 1.15L1.85 3.20L0.00 2.30L-1.85 3.20L-1.99 1.15L-3.70 0.00L-1.99 -1.15L-1.85 -3.20L-0.00 -2.30Z" stroke-width="0.83" stroke-linejoin="round"/></g><g transform="translate(562.7 321.4) rotate(0) scale(0.93)" stroke="#c9463b" stroke-width="0.65" stroke-linecap="round" fill="none"><g transform="rotate(0)"><path d="M0 -2.600V-9.300 M0 -4.300l-2.300 -1.700 M0 -4.300l2.300 -1.700 M0 -6l-1.900 -1.500 M0 -6l1.900 -1.500 M0 -7.600l-1.300 -1.100 M0 -7.600l1.300 -1.100"/><circle cx="0" cy="-9.500" r="0.950" fill="#c9463b" stroke="none"/></g><g transform="rotate(60)"><path d="M0 -2.600V-9.300 M0 -4.300l-2.300 -1.700 M0 -4.300l2.300 -1.700 M0 -6l-1.900 -1.500 M0 -6l1.900 -1.500 M0 -7.600l-1.300 -1.100 M0 -7.600l1.300 -1.100"/><circle cx="0" cy="-9.500" r="0.950" fill="#c9463b" stroke="none"/></g><g transform="rotate(120)"><path d="M0 -2.600V-9.300 M0 -4.300l-2.300 -1.700 M0 -4.300l2.300 -1.700 M0 -6l-1.900 -1.500 M0 -6l1.900 -1.500 M0 -7.600l-1.300 -1.100 M0 -7.600l1.300 -1.100"/><circle cx="0" cy="-9.500" r="0.950" fill="#c9463b" stroke="none"/></g><g transform="rotate(180)"><path d="M0 -2.600V-9.300 M0 -4.300l-2.300 -1.700 M0 -4.300l2.300 -1.700 M0 -6l-1.900 -1.500 M0 -6l1.900 -1.500 M0 -7.600l-1.300 -1.100 M0 -7.600l1.300 -1.100"/><circle cx="0" cy="-9.500" r="0.950" fill="#c9463b" stroke="none"/></g><g transform="rotate(240)"><path d="M0 -2.600V-9.300 M0 -4.300l-2.300 -1.700 M0 -4.300l2.300 -1.700 M0 -6l-1.900 -1.500 M0 -6l1.900 -1.500 M0 -7.600l-1.300 -1.100 M0 -7.600l1.300 -1.100"/><circle cx="0" cy="-9.500" r="0.950" fill="#c9463b" stroke="none"/></g><g transform="rotate(300)"><path d="M0 -2.600V-9.300 M0 -4.300l-2.300 -1.700 M0 -4.300l2.300 -1.700 M0 -6l-1.900 -1.500 M0 -6l1.900 -1.500 M0 -7.600l-1.300 -1.100 M0 -7.600l1.300 -1.100"/><circle cx="0" cy="-9.500" r="0.950" fill="#c9463b" stroke="none"/></g><path d="M1.85 -3.20L1.99 -1.15L3.70 -0.00L1.99 1.15L1.85 3.20L0.00 2.30L-1.85 3.20L-1.99 1.15L-3.70 0.00L-1.99 -1.15L-1.85 -3.20L-0.00 -2.30Z" stroke-width="0.97" stroke-linejoin="round"/></g><g transform="translate(587.3 332) rotate(0) scale(1.6800000000000002)" stroke="#2d6a40" stroke-width="0.55" stroke-linecap="round" fill="none"><g transform="rotate(0)"><path d="M0 -2.600V-9.300 M0 -4.300l-2.300 -1.700 M0 -4.300l2.300 -1.700 M0 -6l-1.900 -1.500 M0 -6l1.900 -1.500 M0 -7.600l-1.300 -1.100 M0 -7.600l1.300 -1.100"/><circle cx="0" cy="-9.500" r="0.950" fill="#2d6a40" stroke="none"/></g><g transform="rotate(60)"><path d="M0 -2.600V-9.300 M0 -4.300l-2.300 -1.700 M0 -4.300l2.300 -1.700 M0 -6l-1.900 -1.500 M0 -6l1.900 -1.500 M0 -7.600l-1.300 -1.100 M0 -7.600l1.300 -1.100"/><circle cx="0" cy="-9.500" r="0.950" fill="#2d6a40" stroke="none"/></g><g transform="rotate(120)"><path d="M0 -2.600V-9.300 M0 -4.300l-2.300 -1.700 M0 -4.300l2.300 -1.700 M0 -6l-1.900 -1.500 M0 -6l1.900 -1.500 M0 -7.600l-1.300 -1.100 M0 -7.600l1.300 -1.100"/><circle cx="0" cy="-9.500" r="0.950" fill="#2d6a40" stroke="none"/></g><g transform="rotate(180)"><path d="M0 -2.600V-9.300 M0 -4.300l-2.300 -1.700 M0 -4.300l2.300 -1.700 M0 -6l-1.900 -1.500 M0 -6l1.900 -1.500 M0 -7.600l-1.300 -1.100 M0 -7.600l1.300 -1.100"/><circle cx="0" cy="-9.500" r="0.950" fill="#2d6a40" stroke="none"/></g><g transform="rotate(240)"><path d="M0 -2.600V-9.300 M0 -4.300l-2.300 -1.700 M0 -4.300l2.300 -1.700 M0 -6l-1.900 -1.500 M0 -6l1.900 -1.500 M0 -7.600l-1.300 -1.100 M0 -7.600l1.300 -1.100"/><circle cx="0" cy="-9.500" r="0.950" fill="#2d6a40" stroke="none"/></g><g transform="rotate(300)"><path d="M0 -2.600V-9.300 M0 -4.300l-2.300 -1.700 M0 -4.300l2.300 -1.700 M0 -6l-1.900 -1.500 M0 -6l1.900 -1.500 M0 -7.600l-1.300 -1.100 M0 -7.600l1.300 -1.100"/><circle cx="0" cy="-9.500" r="0.950" fill="#2d6a40" stroke="none"/></g><path d="M1.85 -3.20L1.99 -1.15L3.70 -0.00L1.99 1.15L1.85 3.20L0.00 2.30L-1.85 3.20L-1.99 1.15L-3.70 0.00L-1.99 -1.15L-1.85 -3.20L-0.00 -2.30Z" stroke-width="0.83" stroke-linejoin="round"/></g><g transform="translate(583.7 387.8) rotate(-20) scale(1.23)" stroke="#c9463b" stroke-width="0.55" stroke-linecap="round" fill="none"><g transform="rotate(0)"><path d="M0 -2.600V-9.300 M0 -4.300l-2.300 -1.700 M0 -4.300l2.300 -1.700 M0 -6l-1.900 -1.500 M0 -6l1.900 -1.500 M0 -7.600l-1.300 -1.100 M0 -7.600l1.300 -1.100"/><circle cx="0" cy="-9.500" r="0.950" fill="#c9463b" stroke="none"/></g><g transform="rotate(60)"><path d="M0 -2.600V-9.300 M0 -4.300l-2.300 -1.700 M0 -4.300l2.300 -1.700 M0 -6l-1.900 -1.500 M0 -6l1.900 -1.500 M0 -7.600l-1.300 -1.100 M0 -7.600l1.300 -1.100"/><circle cx="0" cy="-9.500" r="0.950" fill="#c9463b" stroke="none"/></g><g transform="rotate(120)"><path d="M0 -2.600V-9.300 M0 -4.300l-2.300 -1.700 M0 -4.300l2.300 -1.700 M0 -6l-1.900 -1.500 M0 -6l1.900 -1.500 M0 -7.600l-1.300 -1.100 M0 -7.600l1.300 -1.100"/><circle cx="0" cy="-9.500" r="0.950" fill="#c9463b" stroke="none"/></g><g transform="rotate(180)"><path d="M0 -2.600V-9.300 M0 -4.300l-2.300 -1.700 M0 -4.300l2.300 -1.700 M0 -6l-1.900 -1.500 M0 -6l1.900 -1.500 M0 -7.600l-1.300 -1.100 M0 -7.600l1.300 -1.100"/><circle cx="0" cy="-9.500" r="0.950" fill="#c9463b" stroke="none"/></g><g transform="rotate(240)"><path d="M0 -2.600V-9.300 M0 -4.300l-2.300 -1.700 M0 -4.300l2.300 -1.700 M0 -6l-1.900 -1.500 M0 -6l1.900 -1.500 M0 -7.600l-1.300 -1.100 M0 -7.600l1.300 -1.100"/><circle cx="0" cy="-9.500" r="0.950" fill="#c9463b" stroke="none"/></g><g transform="rotate(300)"><path d="M0 -2.600V-9.300 M0 -4.300l-2.300 -1.700 M0 -4.300l2.300 -1.700 M0 -6l-1.900 -1.500 M0 -6l1.900 -1.500 M0 -7.600l-1.300 -1.100 M0 -7.600l1.300 -1.100"/><circle cx="0" cy="-9.500" r="0.950" fill="#c9463b" stroke="none"/></g><path d="M1.85 -3.20L1.99 -1.15L3.70 -0.00L1.99 1.15L1.85 3.20L0.00 2.30L-1.85 3.20L-1.99 1.15L-3.70 0.00L-1.99 -1.15L-1.85 -3.20L-0.00 -2.30Z" stroke-width="0.82" stroke-linejoin="round"/></g><g transform="translate(403.6 434.7) rotate(0) scale(0.9199999999999999)" stroke="#c9463b" stroke-width="0.65" stroke-linecap="round" fill="none"><g transform="rotate(0)"><path d="M0 -2.600V-9.300 M0 -4.300l-2.300 -1.700 M0 -4.300l2.300 -1.700 M0 -6l-1.900 -1.500 M0 -6l1.900 -1.500 M0 -7.600l-1.300 -1.100 M0 -7.600l1.300 -1.100"/><circle cx="0" cy="-9.500" r="0.950" fill="#c9463b" stroke="none"/></g><g transform="rotate(60)"><path d="M0 -2.600V-9.300 M0 -4.300l-2.300 -1.700 M0 -4.300l2.300 -1.700 M0 -6l-1.900 -1.500 M0 -6l1.900 -1.500 M0 -7.600l-1.300 -1.100 M0 -7.600l1.300 -1.100"/><circle cx="0" cy="-9.500" r="0.950" fill="#c9463b" stroke="none"/></g><g transform="rotate(120)"><path d="M0 -2.600V-9.300 M0 -4.300l-2.300 -1.700 M0 -4.300l2.300 -1.700 M0 -6l-1.900 -1.500 M0 -6l1.900 -1.500 M0 -7.600l-1.300 -1.100 M0 -7.600l1.300 -1.100"/><circle cx="0" cy="-9.500" r="0.950" fill="#c9463b" stroke="none"/></g><g transform="rotate(180)"><path d="M0 -2.600V-9.300 M0 -4.300l-2.300 -1.700 M0 -4.300l2.300 -1.700 M0 -6l-1.900 -1.500 M0 -6l1.900 -1.500 M0 -7.600l-1.300 -1.100 M0 -7.600l1.300 -1.100"/><circle cx="0" cy="-9.500" r="0.950" fill="#c9463b" stroke="none"/></g><g transform="rotate(240)"><path d="M0 -2.600V-9.300 M0 -4.300l-2.300 -1.700 M0 -4.300l2.300 -1.700 M0 -6l-1.900 -1.500 M0 -6l1.900 -1.500 M0 -7.600l-1.300 -1.100 M0 -7.600l1.300 -1.100"/><circle cx="0" cy="-9.500" r="0.950" fill="#c9463b" stroke="none"/></g><g transform="rotate(300)"><path d="M0 -2.600V-9.300 M0 -4.300l-2.300 -1.700 M0 -4.300l2.300 -1.700 M0 -6l-1.900 -1.500 M0 -6l1.900 -1.500 M0 -7.600l-1.300 -1.100 M0 -7.600l1.300 -1.100"/><circle cx="0" cy="-9.500" r="0.950" fill="#c9463b" stroke="none"/></g><path d="M1.85 -3.20L1.99 -1.15L3.70 -0.00L1.99 1.15L1.85 3.20L0.00 2.30L-1.85 3.20L-1.99 1.15L-3.70 0.00L-1.99 -1.15L-1.85 -3.20L-0.00 -2.30Z" stroke-width="0.98" stroke-linejoin="round"/></g><g font-family="Liberation Sans,sans-serif"><text transform="translate(444.78 201.27) rotate(-86.76) scale(0.54 1)" text-anchor="middle" font-size="18.2" font-weight="700" fill="#2b5937" stroke="#2b5937" stroke-width="0.450" stroke-linejoin="round">J</text><text transform="translate(445.21 196.98) rotate(-81.64) scale(0.54 1)" text-anchor="middle" font-size="18.2" font-weight="700" fill="#2b5937" stroke="#2b5937" stroke-width="0.450" stroke-linejoin="round">I</text><text transform="translate(446.23 191.95) rotate(-75.56) scale(0.54 1)" text-anchor="middle" font-size="18.2" font-weight="700" fill="#2b5937" stroke="#2b5937" stroke-width="0.450" stroke-linejoin="round">N</text><text transform="translate(448.69 184.78) rotate(-66.55) scale(0.54 1)" text-anchor="middle" font-size="18.2" font-weight="700" fill="#2b5937" stroke="#2b5937" stroke-width="0.450" stroke-linejoin="round">G</text><text transform="translate(451.95 178.55) rotate(-58.20) scale(0.54 1)" text-anchor="middle" font-size="18.2" font-weight="700" fill="#2b5937" stroke="#2b5937" stroke-width="0.450" stroke-linejoin="round">L</text><text transform="translate(455.73 173.28) rotate(-50.50) scale(0.54 1)" text-anchor="middle" font-size="18.2" font-weight="700" fill="#2b5937" stroke="#2b5937" stroke-width="0.450" stroke-linejoin="round">E</text><text transform="translate(459.01 169.69) rotate(-44.73) scale(0.54 1)" text-anchor="middle" font-size="18.2" font-weight="700" fill="#2b5937" stroke="#2b5937" stroke-width="0.450" stroke-linejoin="round">,</text><text transform="translate(465.64 164.20) rotate(-34.51) scale(0.54 1)" text-anchor="middle" font-size="18.2" font-weight="700" fill="#2b5937" stroke="#2b5937" stroke-width="0.450" stroke-linejoin="round">M</text><text transform="translate(470.49 161.27) rotate(-27.78) scale(0.54 1)" text-anchor="middle" font-size="18.2" font-weight="700" fill="#2b5937" stroke="#2b5937" stroke-width="0.450" stroke-linejoin="round">I</text><text transform="translate(475.15 159.12) rotate(-21.69) scale(0.54 1)" text-anchor="middle" font-size="18.2" font-weight="700" fill="#2b5937" stroke="#2b5937" stroke-width="0.450" stroke-linejoin="round">N</text><text transform="translate(482.39 156.88) rotate(-12.69) scale(0.54 1)" text-anchor="middle" font-size="18.2" font-weight="700" fill="#2b5937" stroke="#2b5937" stroke-width="0.450" stroke-linejoin="round">G</text><text transform="translate(489.35 155.84) rotate(-4.34) scale(0.54 1)" text-anchor="middle" font-size="18.2" font-weight="700" fill="#2b5937" stroke="#2b5937" stroke-width="0.450" stroke-linejoin="round">L</text><text transform="translate(495.84 155.78) rotate(3.37) scale(0.54 1)" text-anchor="middle" font-size="18.2" font-weight="700" fill="#2b5937" stroke="#2b5937" stroke-width="0.450" stroke-linejoin="round">E</text><text transform="translate(500.66 156.31) rotate(9.13) scale(0.54 1)" text-anchor="middle" font-size="18.2" font-weight="700" fill="#2b5937" stroke="#2b5937" stroke-width="0.450" stroke-linejoin="round">,</text><text transform="translate(508.49 158.25) rotate(18.71) scale(0.54 1)" text-anchor="middle" font-size="18.2" font-weight="700" fill="#2b5937" stroke="#2b5937" stroke-width="0.450" stroke-linejoin="round">A</text><text transform="translate(515.22 161.11) rotate(27.39) scale(0.54 1)" text-anchor="middle" font-size="18.2" font-weight="700" fill="#2b5937" stroke="#2b5937" stroke-width="0.450" stroke-linejoin="round">N</text><text transform="translate(521.43 164.96) rotate(36.06) scale(0.54 1)" text-anchor="middle" font-size="18.2" font-weight="700" fill="#2b5937" stroke="#2b5937" stroke-width="0.450" stroke-linejoin="round">D</text><text transform="translate(529.03 171.83) rotate(48.23) scale(0.54 1)" text-anchor="middle" font-size="18.2" font-weight="700" fill="#2b5937" stroke="#2b5937" stroke-width="0.450" stroke-linejoin="round">C</text><text transform="translate(533.47 177.63) rotate(56.91) scale(0.54 1)" text-anchor="middle" font-size="18.2" font-weight="700" fill="#2b5937" stroke="#2b5937" stroke-width="0.450" stroke-linejoin="round">H</text><text transform="translate(536.87 183.79) rotate(65.26) scale(0.54 1)" text-anchor="middle" font-size="18.2" font-weight="700" fill="#2b5937" stroke="#2b5937" stroke-width="0.450" stroke-linejoin="round">E</text><text transform="translate(539.26 190.12) rotate(73.30) scale(0.54 1)" text-anchor="middle" font-size="18.2" font-weight="700" fill="#2b5937" stroke="#2b5937" stroke-width="0.450" stroke-linejoin="round">E</text><text transform="translate(540.79 196.99) rotate(81.65) scale(0.54 1)" text-anchor="middle" font-size="18.2" font-weight="700" fill="#2b5937" stroke="#2b5937" stroke-width="0.450" stroke-linejoin="round">R</text><text transform="translate(541.27 202.36) rotate(88.06) scale(0.54 1)" text-anchor="middle" font-size="18.2" font-weight="700" fill="#2b5937" stroke="#2b5937" stroke-width="0.450" stroke-linejoin="round">!</text></g><path d="M492.800 154V182" stroke="#8d8288" stroke-width="0.900"/><circle cx="492.900" cy="203.800" r="18.500" fill="#f4c2b2" opacity=".7"/><defs><linearGradient id="ballg" x1="0" y1="0" x2="0" y2="1"><stop offset="0" stop-color="#d53a2b"/><stop offset="0.5" stop-color="#cd392c"/><stop offset="0.62" stop-color="#bf362b"/><stop offset="1" stop-color="#bb352b"/></linearGradient></defs><circle cx="492.900" cy="203.800" r="17.600" fill="url(#ballg)"/><path d="M488.600 184.500h8.400l1.200 3.800h-10.800z" fill="#ead6d6" opacity=".9"/><path d="M492.800 184.300c-3.800-4.300-8.500-2.200-4.600 1.900 M492.800 184.300c3.800-4.300 8.500-2.200 4.600 1.900" fill="none" stroke="#e3cacf" stroke-width="1.300" opacity=".9"/><path d="M486.500 188.500l1.700 5 M490.600 188.800l.6 5.500 M495 188.800l-.6 5.500 M499.100 188.500l-1.700 5" stroke="#f3cfc6" stroke-width="0.900" stroke-linecap="round"/><path d="M475.700 205.600Q492.800 200.200 509.900 205.600 M476.400 210.900Q492.800 207.700 509.200 210.900" fill="none" stroke="#f2b3a3" stroke-width="1.050"/><path d="M475.900 206.200Q492.800 200.800 509.700 206.200L509.100 210.600Q492.800 207.300 476.500 210.600Z" fill="#b8332a" opacity=".55"/><circle cx="479.8" cy="207.7" r="1.200" fill="#f8ded2"/><circle cx="486.1" cy="206.6" r="1.200" fill="#f8ded2"/><circle cx="492.8" cy="206.1" r="1.200" fill="#f8ded2"/><circle cx="499.5" cy="206.6" r="1.200" fill="#f8ded2"/><circle cx="505.8" cy="207.7" r="1.200" fill="#f8ded2"/><path d="M492.600 210.600l2.300 3.100-2.300 3.100-2.300-3.100z M484.300 212l1.900 2.600-1.900 2.600-1.900-2.600z M500.900 212l1.900 2.600-1.900 2.600-1.900-2.600z" fill="#f8ded2"/><path d="M481.200 217.200l3.300 1.600 4-2.600 4.100 2.400 4.100-2.400 4 2.600 3.300-1.600" fill="none" stroke="#f2b3a3" stroke-width="0.900"/><g id="xmas"><path d="M424.500 245.500C428.500 238 425.500 231.800 419.500 233.200C411 235.500 404.500 249 405.200 261C405.800 269.500 411.500 272.500 417 270C420.500 268.300 423.500 265.500 426 262 M438.800 235C436.500 245 433 256 430 266.500 M432 258.500C435 252.500 439.500 248.800 442.500 250.500C445.500 252.500 441.500 259 441.800 263C442 266 446 266 449.500 262 M449.500 262C453 257.500 456 251 457.800 246.800C459 249.500 461.500 250.500 463 250C461 254.500 458.500 259.500 459.200 263C460 266.200 464.500 265.500 468 261.500 M476.500 248.500C474.500 254 472 259.500 472.300 263C472.800 266.300 477 265.800 480.500 262 M480.500 262C485 257.500 489 252 492.300 247.500C491.500 251.500 495.500 256 494 260.500C492.500 265 487.500 266.800 484 264.200 M507.800 234.500C505.500 244 502.500 254 502.300 261C502.300 266.500 507 266.500 511.500 261.500 M495.500 243.300C503 242.600 510.500 241.800 518 241 M518.300 250.500C516.800 255.500 515.300 260.500 513.800 265.500 M515.600 259.500C518.500 253.500 523 249 526 250.500C529 252.500 525.500 259.500 524 265.500 M525.800 259.500C528.700 253.500 533.200 249 536.200 250.500C539.200 252.500 535.500 259 535.700 263C536 266.300 540 266 543.500 262 M559.500 252.500C557 249 551.500 249.500 548.500 254.500C545.500 259.500 546.500 265 550.500 265.500C554.500 266 558 260 560 253 M561.600 250C560 255 558.500 259.500 558.800 263C559.300 266.300 563.500 265.800 567 262 M567 262C570 258 572.500 252.500 574.300 247C573.800 251.500 578 256 576.500 260.500C575 265 570 266.800 566.500 264" transform="translate(-0.5 0.5)" fill="none" stroke="#2b5d39" stroke-width="5.4" stroke-linecap="round" stroke-linejoin="round"/><path d="M424.500 245.500C428.500 238 425.500 231.800 419.500 233.200C411 235.500 404.500 249 405.200 261C405.800 269.500 411.500 272.500 417 270C420.500 268.300 423.500 265.500 426 262 M438.800 235C436.500 245 433 256 430 266.500 M432 258.500C435 252.500 439.500 248.800 442.500 250.500C445.500 252.500 441.500 259 441.800 263C442 266 446 266 449.500 262 M449.500 262C453 257.500 456 251 457.800 246.800C459 249.500 461.500 250.500 463 250C461 254.500 458.500 259.500 459.200 263C460 266.200 464.500 265.500 468 261.500 M476.500 248.500C474.500 254 472 259.500 472.300 263C472.800 266.300 477 265.800 480.500 262 M480.500 262C485 257.500 489 252 492.300 247.500C491.500 251.500 495.500 256 494 260.500C492.500 265 487.500 266.800 484 264.200 M507.800 234.500C505.500 244 502.500 254 502.300 261C502.300 266.500 507 266.500 511.500 261.500 M495.500 243.300C503 242.600 510.500 241.800 518 241 M518.300 250.500C516.800 255.500 515.300 260.500 513.800 265.500 M515.600 259.500C518.500 253.500 523 249 526 250.500C529 252.500 525.500 259.500 524 265.500 M525.800 259.500C528.700 253.500 533.200 249 536.200 250.500C539.200 252.500 535.500 259 535.700 263C536 266.300 540 266 543.500 262 M559.500 252.500C557 249 551.500 249.500 548.500 254.500C545.500 259.500 546.500 265 550.500 265.500C554.500 266 558 260 560 253 M561.600 250C560 255 558.500 259.500 558.800 263C559.300 266.300 563.500 265.800 567 262 M567 262C570 258 572.500 252.500 574.300 247C573.800 251.500 578 256 576.500 260.500C575 265 570 266.800 566.500 264" transform="translate(-1.0 1.0)" fill="none" stroke="#2b5d39" stroke-width="5.4" stroke-linecap="round" stroke-linejoin="round"/><path d="M424.500 245.500C428.500 238 425.500 231.800 419.500 233.200C411 235.500 404.500 249 405.200 261C405.800 269.500 411.500 272.500 417 270C420.500 268.300 423.500 265.500 426 262 M438.800 235C436.500 245 433 256 430 266.500 M432 258.500C435 252.500 439.500 248.800 442.500 250.500C445.500 252.500 441.500 259 441.800 263C442 266 446 266 449.500 262 M449.500 262C453 257.500 456 251 457.800 246.800C459 249.500 461.500 250.500 463 250C461 254.500 458.500 259.500 459.200 263C460 266.200 464.500 265.500 468 261.500 M476.500 248.500C474.500 254 472 259.500 472.300 263C472.800 266.300 477 265.800 480.500 262 M480.500 262C485 257.500 489 252 492.300 247.500C491.500 251.500 495.500 256 494 260.500C492.500 265 487.500 266.800 484 264.200 M507.800 234.500C505.500 244 502.500 254 502.300 261C502.300 266.500 507 266.500 511.500 261.500 M495.500 243.300C503 242.600 510.500 241.800 518 241 M518.300 250.500C516.800 255.500 515.300 260.500 513.800 265.500 M515.600 259.500C518.500 253.500 523 249 526 250.500C529 252.500 525.500 259.500 524 265.500 M525.800 259.500C528.700 253.500 533.200 249 536.200 250.500C539.200 252.500 535.500 259 535.700 263C536 266.300 540 266 543.500 262 M559.500 252.500C557 249 551.500 249.500 548.500 254.500C545.500 259.500 546.500 265 550.500 265.500C554.500 266 558 260 560 253 M561.600 250C560 255 558.500 259.500 558.800 263C559.300 266.300 563.500 265.800 567 262 M567 262C570 258 572.500 252.500 574.300 247C573.800 251.500 578 256 576.500 260.500C575 265 570 266.800 566.500 264" transform="translate(-1.5 1.5)" fill="none" stroke="#2b5d39" stroke-width="5.4" stroke-linecap="round" stroke-linejoin="round"/><path d="M424.500 245.500C428.500 238 425.500 231.800 419.500 233.200C411 235.500 404.500 249 405.200 261C405.800 269.500 411.500 272.500 417 270C420.500 268.300 423.500 265.500 426 262 M438.800 235C436.500 245 433 256 430 266.500 M432 258.500C435 252.500 439.500 248.800 442.500 250.500C445.500 252.500 441.500 259 441.800 263C442 266 446 266 449.500 262 M449.500 262C453 257.500 456 251 457.800 246.800C459 249.500 461.500 250.500 463 250C461 254.500 458.500 259.500 459.200 263C460 266.200 464.500 265.500 468 261.500 M476.500 248.500C474.500 254 472 259.500 472.300 263C472.800 266.300 477 265.800 480.500 262 M480.500 262C485 257.500 489 252 492.300 247.500C491.500 251.500 495.500 256 494 260.500C492.500 265 487.500 266.800 484 264.200 M507.800 234.500C505.500 244 502.500 254 502.300 261C502.300 266.500 507 266.500 511.500 261.500 M495.500 243.300C503 242.600 510.500 241.800 518 241 M518.300 250.500C516.800 255.500 515.300 260.500 513.800 265.500 M515.600 259.500C518.500 253.500 523 249 526 250.500C529 252.500 525.500 259.500 524 265.500 M525.800 259.500C528.700 253.500 533.200 249 536.200 250.500C539.200 252.500 535.500 259 535.700 263C536 266.300 540 266 543.500 262 M559.500 252.500C557 249 551.500 249.500 548.500 254.500C545.500 259.500 546.500 265 550.500 265.500C554.500 266 558 260 560 253 M561.600 250C560 255 558.500 259.500 558.800 263C559.300 266.300 563.500 265.800 567 262 M567 262C570 258 572.500 252.500 574.300 247C573.800 251.500 578 256 576.500 260.500C575 265 570 266.800 566.500 264" transform="translate(-2.0 2.0)" fill="none" stroke="#2b5d39" stroke-width="5.4" stroke-linecap="round" stroke-linejoin="round"/><path d="M424.500 245.500C428.500 238 425.500 231.800 419.500 233.200C411 235.500 404.500 249 405.200 261C405.800 269.500 411.500 272.500 417 270C420.500 268.300 423.500 265.500 426 262 M438.800 235C436.500 245 433 256 430 266.500 M432 258.500C435 252.500 439.500 248.800 442.500 250.500C445.500 252.500 441.500 259 441.800 263C442 266 446 266 449.500 262 M449.500 262C453 257.500 456 251 457.800 246.800C459 249.500 461.500 250.500 463 250C461 254.500 458.500 259.500 459.200 263C460 266.200 464.500 265.500 468 261.500 M476.500 248.500C474.500 254 472 259.500 472.300 263C472.800 266.300 477 265.800 480.500 262 M480.500 262C485 257.500 489 252 492.300 247.500C491.500 251.500 495.500 256 494 260.500C492.500 265 487.500 266.800 484 264.200 M507.800 234.500C505.500 244 502.500 254 502.300 261C502.300 266.500 507 266.500 511.500 261.500 M495.500 243.300C503 242.600 510.500 241.800 518 241 M518.300 250.500C516.800 255.500 515.300 260.500 513.800 265.500 M515.600 259.500C518.500 253.500 523 249 526 250.500C529 252.500 525.500 259.500 524 265.500 M525.800 259.500C528.700 253.500 533.200 249 536.200 250.500C539.200 252.500 535.500 259 535.700 263C536 266.300 540 266 543.500 262 M559.500 252.500C557 249 551.500 249.500 548.500 254.500C545.500 259.500 546.500 265 550.500 265.500C554.500 266 558 260 560 253 M561.600 250C560 255 558.500 259.500 558.800 263C559.300 266.300 563.500 265.800 567 262 M567 262C570 258 572.500 252.500 574.300 247C573.800 251.500 578 256 576.500 260.500C575 265 570 266.800 566.500 264" transform="translate(-2.5 2.5)" fill="none" stroke="#2b5d39" stroke-width="5.4" stroke-linecap="round" stroke-linejoin="round"/><path d="M424.500 245.500C428.500 238 425.500 231.800 419.500 233.200C411 235.500 404.500 249 405.200 261C405.800 269.500 411.500 272.500 417 270C420.500 268.300 423.500 265.500 426 262 M438.800 235C436.500 245 433 256 430 266.500 M432 258.500C435 252.500 439.500 248.800 442.500 250.500C445.500 252.500 441.500 259 441.800 263C442 266 446 266 449.500 262 M449.500 262C453 257.500 456 251 457.800 246.800C459 249.500 461.500 250.500 463 250C461 254.500 458.500 259.500 459.200 263C460 266.200 464.500 265.500 468 261.500 M476.500 248.500C474.500 254 472 259.500 472.300 263C472.800 266.300 477 265.800 480.500 262 M480.500 262C485 257.500 489 252 492.300 247.500C491.500 251.500 495.500 256 494 260.500C492.500 265 487.500 266.800 484 264.200 M507.800 234.500C505.500 244 502.500 254 502.300 261C502.300 266.500 507 266.500 511.500 261.500 M495.500 243.300C503 242.600 510.500 241.800 518 241 M518.300 250.500C516.800 255.500 515.300 260.500 513.800 265.500 M515.600 259.500C518.500 253.500 523 249 526 250.500C529 252.500 525.500 259.500 524 265.500 M525.800 259.500C528.700 253.500 533.200 249 536.200 250.500C539.200 252.500 535.500 259 535.700 263C536 266.300 540 266 543.500 262 M559.500 252.500C557 249 551.500 249.500 548.500 254.500C545.500 259.500 546.500 265 550.500 265.500C554.500 266 558 260 560 253 M561.600 250C560 255 558.500 259.500 558.800 263C559.300 266.300 563.500 265.800 567 262 M567 262C570 258 572.500 252.500 574.300 247C573.800 251.500 578 256 576.500 260.500C575 265 570 266.800 566.500 264" transform="translate(-3.0 3.0)" fill="none" stroke="#2b5d39" stroke-width="5.4" stroke-linecap="round" stroke-linejoin="round"/><ellipse cx="476.9" cy="239.4" rx="3.15" ry="3.65" transform="rotate(25 477.4 238.9)" fill="#2b5d39"/><ellipse cx="476.4" cy="239.9" rx="3.15" ry="3.65" transform="rotate(25 477.4 238.9)" fill="#2b5d39"/><ellipse cx="475.9" cy="240.4" rx="3.15" ry="3.65" transform="rotate(25 477.4 238.9)" fill="#2b5d39"/><ellipse cx="475.4" cy="240.9" rx="3.15" ry="3.65" transform="rotate(25 477.4 238.9)" fill="#2b5d39"/><ellipse cx="474.9" cy="241.4" rx="3.15" ry="3.65" transform="rotate(25 477.4 238.9)" fill="#2b5d39"/><path d="M424.500 245.500C428.500 238 425.500 231.800 419.500 233.200C411 235.500 404.500 249 405.200 261C405.800 269.500 411.500 272.500 417 270C420.500 268.300 423.500 265.500 426 262 M438.800 235C436.500 245 433 256 430 266.500 M432 258.500C435 252.500 439.500 248.800 442.500 250.500C445.500 252.500 441.500 259 441.800 263C442 266 446 266 449.500 262 M449.500 262C453 257.500 456 251 457.800 246.800C459 249.500 461.500 250.500 463 250C461 254.500 458.500 259.500 459.200 263C460 266.200 464.500 265.500 468 261.500 M476.500 248.500C474.500 254 472 259.500 472.300 263C472.800 266.300 477 265.800 480.500 262 M480.500 262C485 257.500 489 252 492.300 247.500C491.500 251.500 495.500 256 494 260.500C492.500 265 487.500 266.800 484 264.200 M507.800 234.500C505.500 244 502.500 254 502.300 261C502.300 266.500 507 266.500 511.500 261.500 M495.500 243.300C503 242.600 510.500 241.800 518 241 M518.300 250.500C516.800 255.500 515.300 260.500 513.800 265.500 M515.600 259.500C518.500 253.500 523 249 526 250.500C529 252.500 525.500 259.500 524 265.500 M525.800 259.500C528.700 253.500 533.200 249 536.200 250.500C539.200 252.500 535.500 259 535.700 263C536 266.300 540 266 543.500 262 M559.500 252.500C557 249 551.500 249.500 548.500 254.500C545.500 259.500 546.500 265 550.500 265.500C554.500 266 558 260 560 253 M561.600 250C560 255 558.500 259.500 558.800 263C559.300 266.300 563.500 265.800 567 262 M567 262C570 258 572.500 252.500 574.300 247C573.800 251.500 578 256 576.500 260.500C575 265 570 266.800 566.500 264" fill="none" stroke="#2b5d39" stroke-width="5.4" stroke-linecap="round" stroke-linejoin="round"/><ellipse cx="477.4" cy="238.9" rx="3.15" ry="3.65" transform="rotate(25 477.4 238.9)" fill="#2b5d39"/><path d="M424.500 245.500C428.500 238 425.500 231.800 419.500 233.200C411 235.500 404.500 249 405.200 261C405.800 269.500 411.500 272.500 417 270C420.500 268.300 423.500 265.500 426 262 M438.800 235C436.500 245 433 256 430 266.500 M432 258.500C435 252.500 439.500 248.800 442.500 250.500C445.500 252.500 441.500 259 441.800 263C442 266 446 266 449.500 262 M449.500 262C453 257.500 456 251 457.800 246.800C459 249.500 461.500 250.500 463 250C461 254.500 458.500 259.500 459.200 263C460 266.200 464.500 265.500 468 261.500 M476.500 248.500C474.500 254 472 259.500 472.300 263C472.800 266.300 477 265.800 480.500 262 M480.500 262C485 257.500 489 252 492.300 247.500C491.500 251.500 495.500 256 494 260.500C492.500 265 487.500 266.800 484 264.200 M507.800 234.500C505.500 244 502.500 254 502.300 261C502.300 266.500 507 266.500 511.500 261.500 M495.500 243.300C503 242.600 510.500 241.800 518 241 M518.300 250.500C516.800 255.500 515.300 260.500 513.800 265.500 M515.600 259.500C518.500 253.500 523 249 526 250.500C529 252.500 525.500 259.500 524 265.500 M525.800 259.500C528.700 253.500 533.200 249 536.200 250.500C539.200 252.500 535.500 259 535.700 263C536 266.300 540 266 543.500 262 M559.500 252.500C557 249 551.500 249.500 548.500 254.500C545.500 259.500 546.500 265 550.500 265.500C554.500 266 558 260 560 253 M561.600 250C560 255 558.500 259.500 558.800 263C559.300 266.300 563.500 265.800 567 262 M567 262C570 258 572.500 252.500 574.300 247C573.800 251.500 578 256 576.500 260.500C575 265 570 266.800 566.500 264" fill="none" stroke="#e0f1e7" stroke-width="3.7" stroke-linecap="round" stroke-linejoin="round"/><ellipse cx="477.4" cy="238.9" rx="2.3" ry="2.8" transform="rotate(25 477.4 238.9)" fill="#e0f1e7"/><path d="M456.500 283.500C453.500 295 450 307 446.800 318.500 M447 288C449.500 282 457 279.300 463 280.500C469 281.800 471 287.500 468.800 293.500C466.500 299.500 460.500 304.500 453.500 304.500 M485 299.500C482.500 296 477 296.500 474 301.500C471 306.500 472 312 476 312.500C480 313 483.500 307 485.500 300 M487 297C485.400 302 483.700 306.500 484 310C484.500 313.300 488.500 312.800 491.500 309 M491.500 309C494.500 304.500 497.300 298.500 498.800 294.500C500 297.200 502.500 298.200 504 297.700C502 302 499.800 306.500 500.300 310C501 313.200 505 312.500 508 309 M518.800 282.500C516.500 291 513 301 512.600 308C512.500 313.300 517 313.300 521 308.500 M504.500 290.700C512.500 289.800 520.500 288.900 528.300 288 M524.800 297.500C523.500 302 521.800 307 523.200 310.500C525 314 530 312 533 307C535 303.500 536.500 300 537.500 297 M538.500 294.500C536.500 306 533.500 319 530 331" transform="translate(-0.5 0.5)" fill="none" stroke="#2b5d39" stroke-width="5.4" stroke-linecap="round" stroke-linejoin="round"/><path d="M456.500 283.500C453.500 295 450 307 446.800 318.500 M447 288C449.500 282 457 279.300 463 280.500C469 281.800 471 287.500 468.800 293.500C466.500 299.500 460.500 304.500 453.500 304.500 M485 299.500C482.500 296 477 296.500 474 301.500C471 306.500 472 312 476 312.500C480 313 483.500 307 485.500 300 M487 297C485.400 302 483.700 306.500 484 310C484.500 313.300 488.500 312.800 491.500 309 M491.500 309C494.500 304.500 497.300 298.500 498.800 294.500C500 297.200 502.500 298.200 504 297.700C502 302 499.800 306.500 500.300 310C501 313.200 505 312.500 508 309 M518.800 282.500C516.500 291 513 301 512.600 308C512.500 313.300 517 313.300 521 308.500 M504.500 290.700C512.500 289.800 520.500 288.900 528.300 288 M524.800 297.500C523.500 302 521.800 307 523.200 310.500C525 314 530 312 533 307C535 303.500 536.500 300 537.500 297 M538.500 294.500C536.500 306 533.500 319 530 331" transform="translate(-1.0 1.0)" fill="none" stroke="#2b5d39" stroke-width="5.4" stroke-linecap="round" stroke-linejoin="round"/><path d="M456.500 283.500C453.500 295 450 307 446.800 318.500 M447 288C449.500 282 457 279.300 463 280.500C469 281.800 471 287.500 468.800 293.500C466.500 299.500 460.500 304.500 453.500 304.500 M485 299.500C482.500 296 477 296.500 474 301.500C471 306.500 472 312 476 312.500C480 313 483.500 307 485.500 300 M487 297C485.400 302 483.700 306.500 484 310C484.500 313.300 488.500 312.800 491.500 309 M491.500 309C494.500 304.500 497.300 298.500 498.800 294.500C500 297.200 502.500 298.200 504 297.700C502 302 499.800 306.500 500.300 310C501 313.200 505 312.500 508 309 M518.800 282.500C516.500 291 513 301 512.600 308C512.500 313.300 517 313.300 521 308.500 M504.500 290.700C512.500 289.800 520.500 288.900 528.300 288 M524.800 297.500C523.500 302 521.800 307 523.200 310.500C525 314 530 312 533 307C535 303.500 536.500 300 537.500 297 M538.500 294.500C536.500 306 533.500 319 530 331" transform="translate(-1.5 1.5)" fill="none" stroke="#2b5d39" stroke-width="5.4" stroke-linecap="round" stroke-linejoin="round"/><path d="M456.500 283.500C453.500 295 450 307 446.800 318.500 M447 288C449.500 282 457 279.300 463 280.500C469 281.800 471 287.500 468.800 293.500C466.500 299.500 460.500 304.500 453.500 304.500 M485 299.500C482.500 296 477 296.500 474 301.500C471 306.500 472 312 476 312.500C480 313 483.500 307 485.500 300 M487 297C485.400 302 483.700 306.500 484 310C484.500 313.300 488.500 312.800 491.500 309 M491.500 309C494.500 304.500 497.300 298.500 498.800 294.500C500 297.200 502.500 298.200 504 297.700C502 302 499.800 306.500 500.300 310C501 313.200 505 312.500 508 309 M518.800 282.500C516.500 291 513 301 512.600 308C512.500 313.300 517 313.300 521 308.500 M504.500 290.700C512.500 289.800 520.500 288.900 528.300 288 M524.800 297.500C523.500 302 521.800 307 523.200 310.500C525 314 530 312 533 307C535 303.500 536.500 300 537.500 297 M538.500 294.500C536.500 306 533.500 319 530 331" transform="translate(-2.0 2.0)" fill="none" stroke="#2b5d39" stroke-width="5.4" stroke-linecap="round" stroke-linejoin="round"/><path d="M456.500 283.500C453.500 295 450 307 446.800 318.500 M447 288C449.500 282 457 279.300 463 280.500C469 281.800 471 287.500 468.800 293.500C466.500 299.500 460.500 304.500 453.500 304.500 M485 299.500C482.500 296 477 296.500 474 301.500C471 306.500 472 312 476 312.500C480 313 483.500 307 485.500 300 M487 297C485.400 302 483.700 306.500 484 310C484.500 313.300 488.500 312.800 491.500 309 M491.500 309C494.500 304.500 497.300 298.500 498.800 294.500C500 297.200 502.500 298.200 504 297.700C502 302 499.800 306.500 500.300 310C501 313.200 505 312.500 508 309 M518.800 282.500C516.500 291 513 301 512.600 308C512.500 313.300 517 313.300 521 308.500 M504.500 290.700C512.500 289.800 520.500 288.900 528.300 288 M524.800 297.500C523.500 302 521.800 307 523.200 310.500C525 314 530 312 533 307C535 303.500 536.500 300 537.500 297 M538.500 294.500C536.500 306 533.500 319 530 331" transform="translate(-2.5 2.5)" fill="none" stroke="#2b5d39" stroke-width="5.4" stroke-linecap="round" stroke-linejoin="round"/><path d="M456.500 283.500C453.500 295 450 307 446.800 318.500 M447 288C449.500 282 457 279.300 463 280.500C469 281.800 471 287.500 468.800 293.500C466.500 299.500 460.500 304.500 453.500 304.500 M485 299.500C482.500 296 477 296.500 474 301.500C471 306.500 472 312 476 312.500C480 313 483.500 307 485.500 300 M487 297C485.400 302 483.700 306.500 484 310C484.500 313.300 488.500 312.800 491.500 309 M491.500 309C494.500 304.500 497.300 298.500 498.800 294.500C500 297.200 502.500 298.200 504 297.700C502 302 499.800 306.500 500.300 310C501 313.200 505 312.500 508 309 M518.800 282.500C516.500 291 513 301 512.600 308C512.500 313.300 517 313.300 521 308.500 M504.500 290.700C512.500 289.800 520.500 288.900 528.300 288 M524.800 297.500C523.500 302 521.800 307 523.200 310.500C525 314 530 312 533 307C535 303.500 536.500 300 537.500 297 M538.500 294.500C536.500 306 533.500 319 530 331" transform="translate(-3.0 3.0)" fill="none" stroke="#2b5d39" stroke-width="5.4" stroke-linecap="round" stroke-linejoin="round"/><path d="M456.500 283.500C453.500 295 450 307 446.800 318.500 M447 288C449.500 282 457 279.300 463 280.500C469 281.800 471 287.500 468.800 293.500C466.500 299.500 460.500 304.500 453.500 304.500 M485 299.500C482.500 296 477 296.500 474 301.500C471 306.500 472 312 476 312.500C480 313 483.500 307 485.500 300 M487 297C485.400 302 483.700 306.500 484 310C484.500 313.300 488.500 312.800 491.500 309 M491.500 309C494.500 304.500 497.300 298.500 498.800 294.500C500 297.200 502.500 298.200 504 297.700C502 302 499.800 306.500 500.300 310C501 313.200 505 312.500 508 309 M518.800 282.500C516.500 291 513 301 512.600 308C512.500 313.300 517 313.300 521 308.500 M504.500 290.700C512.500 289.800 520.500 288.900 528.300 288 M524.800 297.500C523.500 302 521.800 307 523.200 310.500C525 314 530 312 533 307C535 303.500 536.500 300 537.500 297 M538.500 294.500C536.500 306 533.500 319 530 331" fill="none" stroke="#2b5d39" stroke-width="5.4" stroke-linecap="round" stroke-linejoin="round"/><path d="M456.500 283.500C453.500 295 450 307 446.800 318.500 M447 288C449.500 282 457 279.300 463 280.500C469 281.800 471 287.500 468.800 293.500C466.500 299.500 460.500 304.500 453.500 304.500 M485 299.500C482.500 296 477 296.500 474 301.500C471 306.500 472 312 476 312.500C480 313 483.500 307 485.500 300 M487 297C485.400 302 483.700 306.500 484 310C484.500 313.300 488.500 312.800 491.500 309 M491.500 309C494.500 304.500 497.300 298.500 498.800 294.500C500 297.200 502.500 298.200 504 297.700C502 302 499.800 306.500 500.300 310C501 313.200 505 312.500 508 309 M518.800 282.500C516.500 291 513 301 512.600 308C512.500 313.300 517 313.300 521 308.500 M504.500 290.700C512.500 289.800 520.500 288.900 528.300 288 M524.800 297.500C523.500 302 521.800 307 523.200 310.500C525 314 530 312 533 307C535 303.500 536.500 300 537.500 297 M538.500 294.500C536.500 306 533.500 319 530 331" fill="none" stroke="#e0f1e7" stroke-width="3.7" stroke-linecap="round" stroke-linejoin="round"/></g><path d="M446.300 363.200C444.800 354.500 448.500 348.300 453 348C459 347.700 465.500 353.500 467.300 361.300L467.600 363.200L447.400 368.900Z" fill="#2d6a40"/><path d="M447.200 353.800C444.600 358.500 442.600 365 441 371.500" fill="none" stroke="#2d6a40" stroke-width="2.900" stroke-linecap="round"/><circle cx="440.400" cy="373" r="3.700" fill="#2d6a40"/><path d="M446.800 363.600L467.200 358.300" stroke="#74b384" stroke-width="1"/><path d="M447 362.500C445.800 364.500 445 367 444.600 369" fill="none" stroke="#74b384" stroke-width="0.700"/><g font-family="Liberation Sans,sans-serif"><text x="472.6" y="357.4" font-size="16.7" font-weight="700" fill="#ae2f29" stroke="#ae2f29" stroke-width="0.30" stroke-linejoin="round" textLength="39.69999999999993" lengthAdjust="spacingAndGlyphs">7-11PM</text><text x="467.9" y="376.6" font-size="16.7" font-weight="700" fill="#ae2f29" stroke="#ae2f29" stroke-width="0.30" stroke-linejoin="round" textLength="50.39999999999998" lengthAdjust="spacingAndGlyphs">DEC 11TH</text><text x="459.5" y="453.6" font-size="7.6" font-weight="700" fill="#ae2f29" stroke="#ae2f29" stroke-width="0.14" stroke-linejoin="round" textLength="66.5" lengthAdjust="spacingAndGlyphs">7503 TURNER RIDGE ROAD</text></g><g font-family="Liberation Serif,serif" font-style="italic" font-weight="400" fill="#3e5c39" stroke="#3e5c39" stroke-width="0.280"><text x="389.500" y="407" font-size="12.800" textLength="104" lengthAdjust="spacingAndGlyphs">Let's make memories</text><text x="431.500" y="422" font-size="12.800" textLength="162" lengthAdjust="spacingAndGlyphs">together at our Christmas Party!</text></g></svg>
</div>
<div class="a" style="left:433.79999999999995px;top:463.9px;width:21.200px;height:21.200px;border-radius:50%;background:#ec3423;border:2.200px solid #f3b9ab"></div>
<div class="a" style="left:458.79999999999995px;top:464.4px;width:20.200px;height:20.200px;border-radius:50%;background:#cf2f9b;border:1.300px solid #e168bc"></div>
<div class="a" style="left:483.09999999999997px;top:464.4px;width:20.200px;height:20.200px;border-radius:50%;background:#e02f48;border:1.300px solid #ec6a7b"></div>
<div class="a" style="left:507.5px;top:464.4px;width:20.200px;height:20.200px;border-radius:50%;background:#f0592e;border:1.300px solid #f58c6c"></div>
<div class="a" style="left:531.9px;top:464.4px;width:20.200px;height:20.200px;border-radius:50%;background:#f7b14c;border:1.300px solid #facc85"></div>
<div class="a" style="left:600.800px;top:489.800px;width:62.400px;height:11px;border-radius:5px 5px 0 0;background:#dd8a5b"></div>
<span class="t" id="t24" style="left:604.6px;top:491.85px;font-size:5.7px;line-height:5.7px;color:#f7dcc6;font-weight:700;letter-spacing:0.090px;">DEVELOPER MODE</span>
<div class="a" style="left:297.500px;top:498.300px;width:391.500px;height:29.700px;border-radius:14.850px;background:#2f2f31;border:1.500px solid #cf8460"></div>
<svg style="left:308.800px;top:509.500px" width="8" height="8" viewBox="-4 -4 8 8"><path d="M-3.200 0H3.200M0 -3.200V3.200" stroke="#e8e8e8" stroke-width="1.050" stroke-linecap="round"/></svg>
<span class="t" id="t25" style="left:325.3px;top:509.75px;font-size:8.3px;line-height:8.3px;color:#adadad;font-weight:400;letter-spacing:-0.027px;">Ask Adobe Express</span>
<svg style="left:648px;top:508.500px" width="8" height="10" viewBox="0 0 16 20"><rect x="5.200" y="1.500" width="5.600" height="10" rx="2.800" fill="none" stroke="#d0d0d0" stroke-width="1.600"/><path d="M2.500 9.500a5.500 5.500 0 0 0 11 0M8 15v3.200" fill="none" stroke="#d0d0d0" stroke-width="1.600" stroke-linecap="round"/></svg>
<div class="a" style="left:664px;top:504.200px;width:18.600px;height:18.600px;border-radius:50%;background:#fbfbfb"></div>
<svg style="left:668.300px;top:508.500px" width="10" height="10" viewBox="0 0 20 20"><path d="M3.500 9v2M6.800 7v6M10 3.500v13M13.200 6.500v7M16.500 9v2" stroke="#222" stroke-width="1.900" stroke-linecap="round"/></svg>
<span class="t" id="t26" style="left:334.3px;top:531.95px;font-size:6.7px;line-height:6.7px;color:#ededed;font-weight:400;letter-spacing:-0.107px;">ChatGPT can make mistakes. OpenAI doesn&#x27;t use adobe-chatgptenterprise workspace data to train its models.</span>
<div class="a" style="left:933.600px;top:507px;width:18.400px;height:18.400px;border-radius:50%;background:#fbf4f6"></div>
<svg style="left:937px;top:510px" width="11.500" height="12.500" viewBox="0 0 22 24"><path d="M10.500 3c1.500 0 1.200 4-0.200 8.200C8.800 15.500 5.500 19.500 4 18.300c-1.500-1.300 2.500-3.800 7.500-4.300 4-0.400 7 0.600 6.200 2-1 1.500-4.800-1-7-4.200C8.600 8.600 9 3 10.500 3z" fill="none" stroke="#7a3246" stroke-width="2.200"/></svg>
<svg style="left:426.400px;top:478.700px" width="24" height="25.500" viewBox="0 0 48 54" preserveAspectRatio="none"><path d="M12 6c0-5.200 7-5.200 7 0V22c0-4 7-4 7 0v2c0-4 7-4 7 0v2.500c0-3.800 6.500-3.600 6.500 .4V37c0 9.500-6 15-15.500 15-7.500 0-11-2.500-14.500-7.500L3 33.500c-2.300-3.400 2-6.500 5-3.500L12 34z" fill="#fdfdfd" stroke="#141414" stroke-width="2.600" stroke-linejoin="round"/><path d="M19 23v4M26 25v3M33 27v2.500" stroke="#8a8a8a" stroke-width="1.300" stroke-linecap="round"/></svg></div></body></html>
